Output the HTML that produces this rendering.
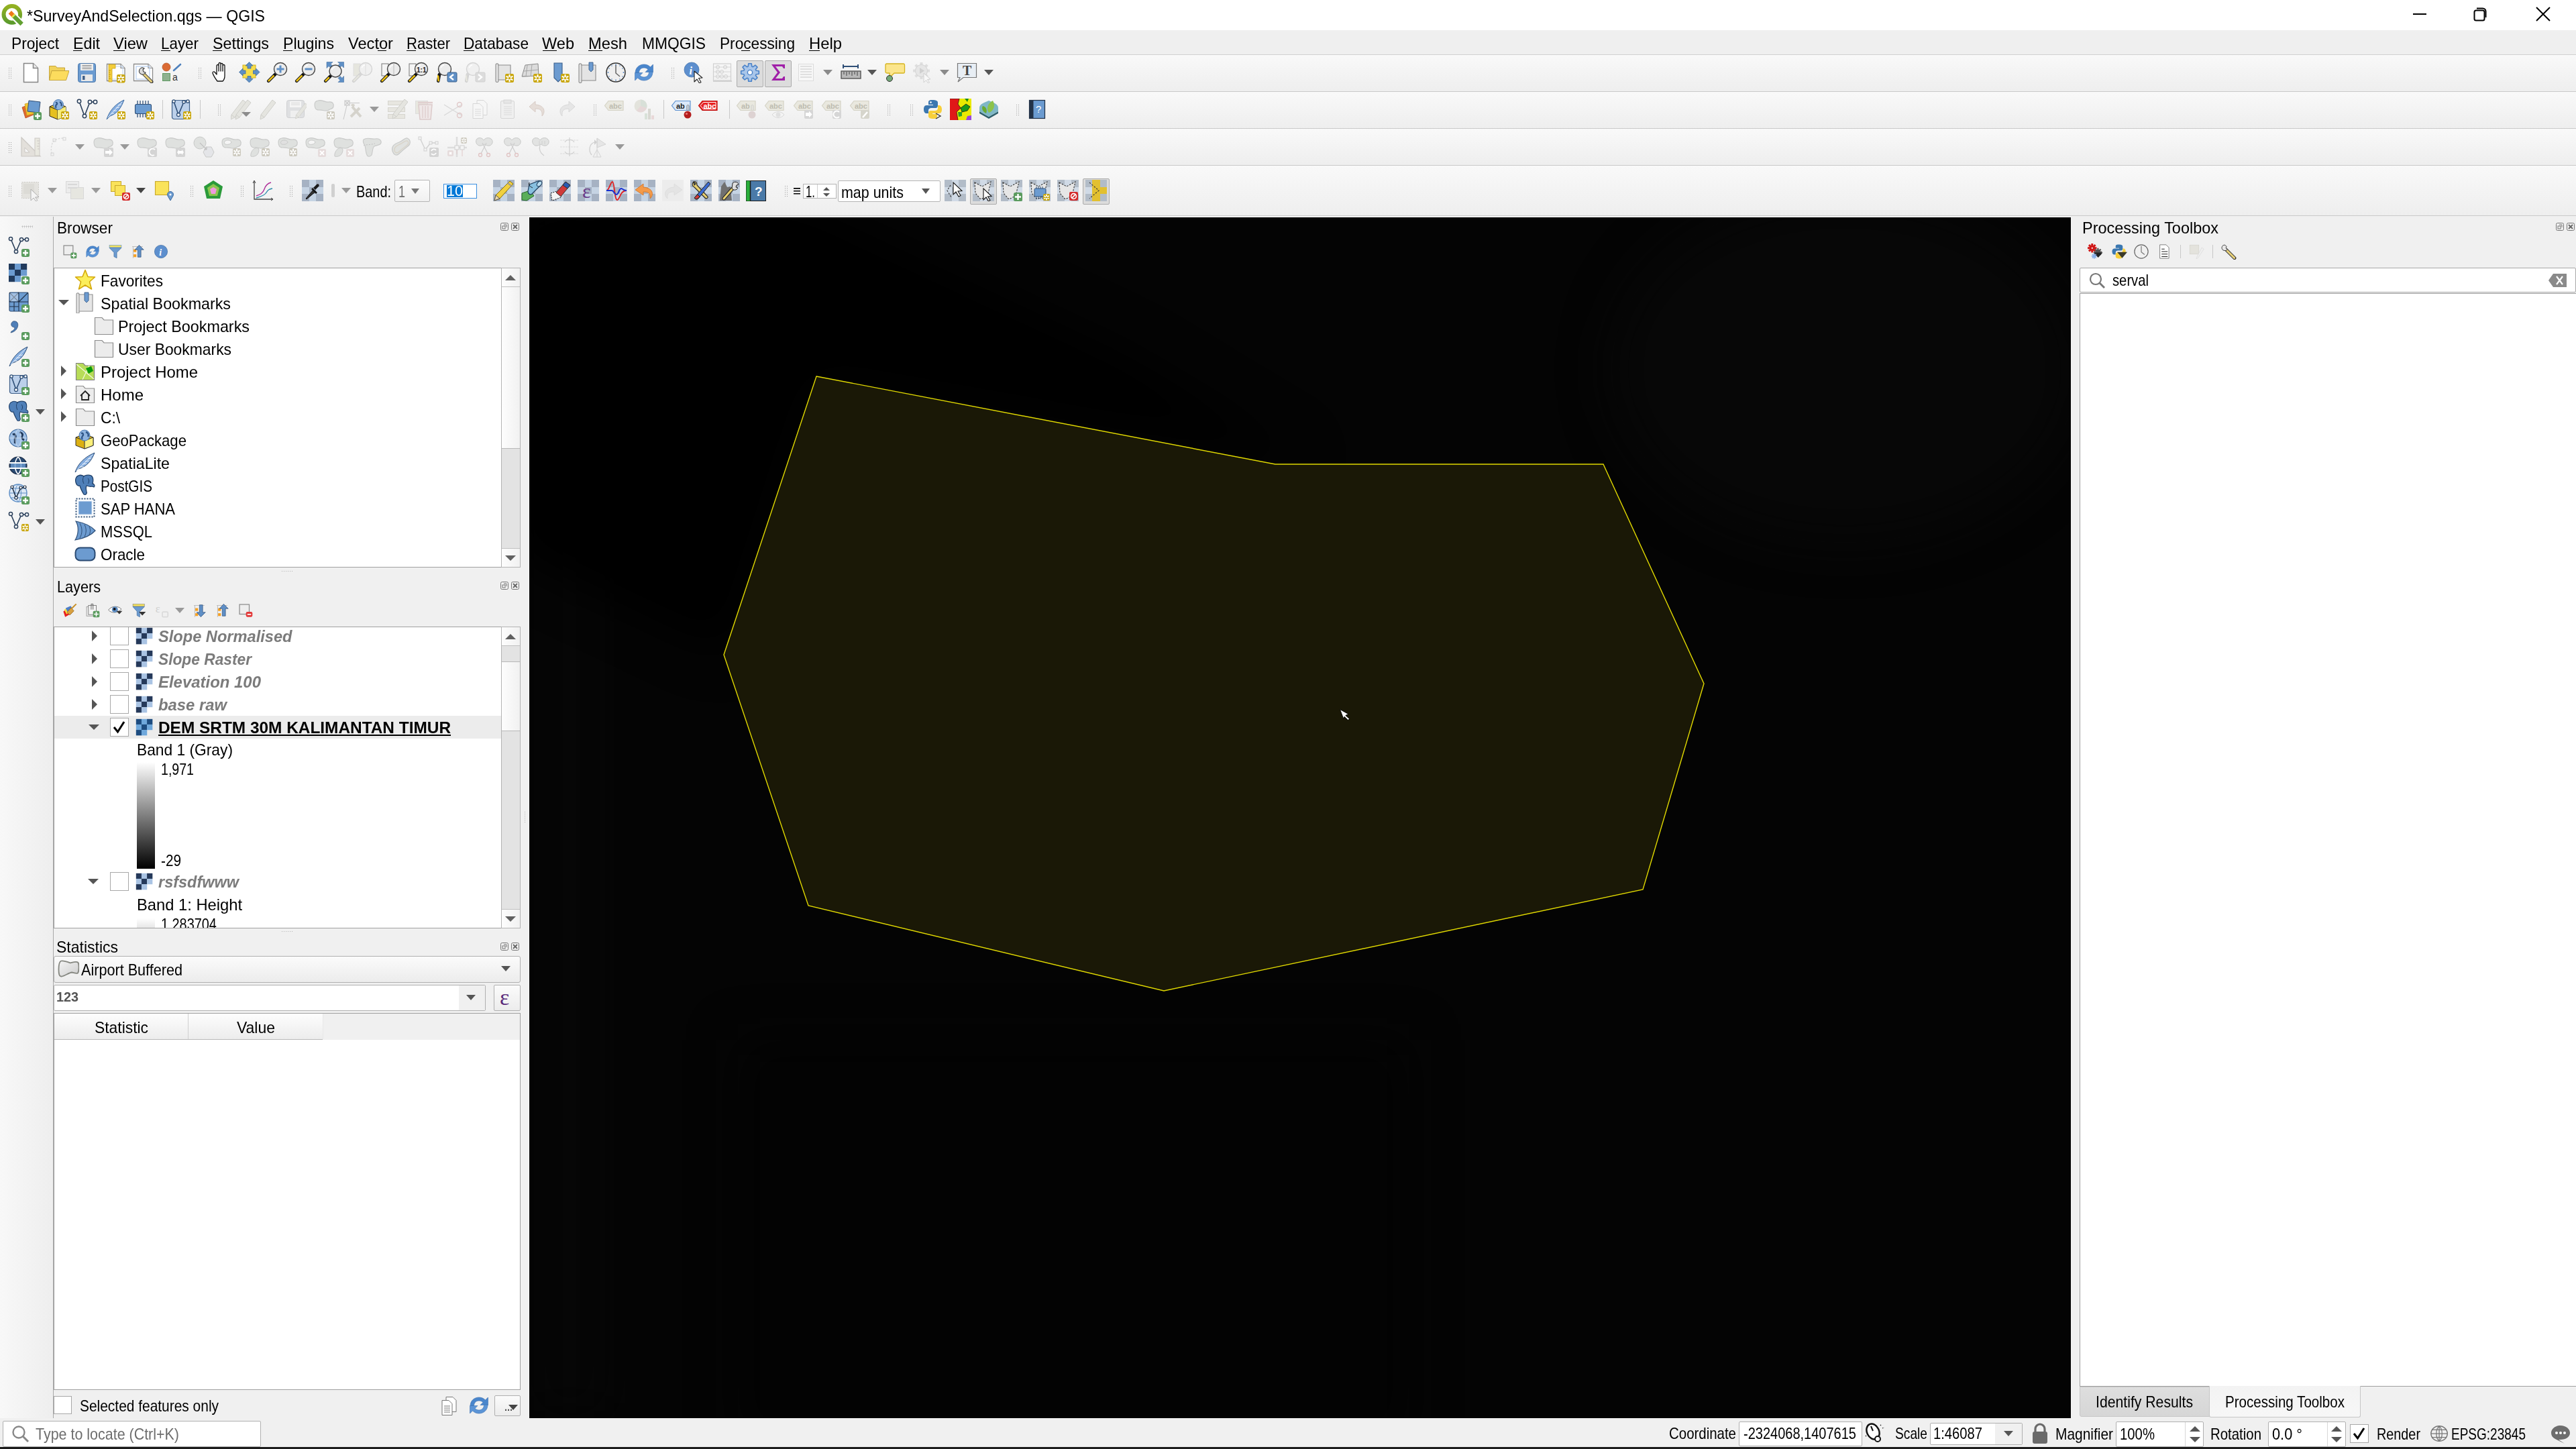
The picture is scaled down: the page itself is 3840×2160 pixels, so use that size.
<!DOCTYPE html>
<html><head><meta charset="utf-8"><style>
*{margin:0;padding:0;box-sizing:content-box}
html,body{width:3840px;height:2160px;overflow:hidden;background:#f0f0f0;position:relative}
.a{position:absolute}
.t{position:absolute;white-space:nowrap;font-family:"Liberation Sans",sans-serif;transform-origin:0 0}
</style></head><body>
<div class="a" style="left:0px;top:0px;width:3840px;height:45px;background:#ffffff;"></div>
<svg class="a" style="left:0;top:0" width="40" height="45"><defs><linearGradient id="qg" x1="0" y1="0" x2="0" y2="1"><stop offset="0" stop-color="#93b122"/><stop offset="1" stop-color="#5c9b2c"/></linearGradient></defs><circle cx="17.8" cy="21.4" r="12.3" fill="none" stroke="url(#qg)" stroke-width="6"/><path d="M20 23.6 L35 38.6" stroke="#fff" stroke-width="10.5"/><path d="M19.5 23 L32.6 36" stroke="#62a032" stroke-width="6.2"/><path d="M14.8 18.3 L19.6 23.1" stroke="#ee7a18" stroke-width="6.2"/><path d="M19.2 22.7 L21 24.5" stroke="#e6e448" stroke-width="6.2"/></svg>
<div class="t" style="left:40px;top:11.7px;font-size:24px;line-height:24px;color:#000;font-weight:400;font-style:normal;transform:scaleX(0.9642);">*SurveyAndSelection.qgs — QGIS</div>
<div class="a" style="left:3597px;top:20px;width:20px;height:2px;background:#000;"></div>
<svg class="a" style="left:3680px;top:5px" width="40" height="32"><rect x="8.5" y="10.5" width="15" height="15" rx="2.5" fill="none" stroke="#000" stroke-width="2"/><path d="M12 7.5 h9 a4.5 4.5 0 0 1 4.5 4.5 v9" fill="none" stroke="#000" stroke-width="2"/></svg>
<svg class="a" style="left:3775px;top:5px" width="32" height="32"><path d="M6 6 L26 26 M26 6 L6 26" stroke="#000" stroke-width="2"/></svg>
<div class="a" style="left:0px;top:45px;width:3840px;height:36px;background:#efefef;"></div>
<div class="a" style="left:0px;top:81px;width:3840px;height:1px;background:#d0d0d0;"></div>
<div class="t" style="left:17px;top:53.2px;font-size:24px;line-height:24px;color:#000;font-weight:400;font-style:normal;transform:scaleX(0.9504);">Project</div>
<div class="a" style="left:49px;top:74.5px;width:7px;height:1.5px;background:#000;"></div>
<div class="t" style="left:109px;top:53.2px;font-size:24px;line-height:24px;color:#000;font-weight:400;font-style:normal;transform:scaleX(0.9671);">Edit</div>
<div class="a" style="left:109px;top:74.5px;width:13px;height:1.5px;background:#000;"></div>
<div class="t" style="left:169px;top:53.2px;font-size:24px;line-height:24px;color:#000;font-weight:400;font-style:normal;transform:scaleX(0.9885);">View</div>
<div class="a" style="left:169px;top:74.5px;width:17px;height:1.5px;background:#000;"></div>
<div class="t" style="left:240px;top:53.2px;font-size:24px;line-height:24px;color:#000;font-weight:400;font-style:normal;transform:scaleX(0.9326);">Layer</div>
<div class="a" style="left:240px;top:74.5px;width:14px;height:1.5px;background:#000;"></div>
<div class="t" style="left:317px;top:53.2px;font-size:24px;line-height:24px;color:#000;font-weight:400;font-style:normal;transform:scaleX(0.9686);">Settings</div>
<div class="a" style="left:317px;top:74.5px;width:14px;height:1.5px;background:#000;"></div>
<div class="t" style="left:422px;top:53.2px;font-size:24px;line-height:24px;color:#000;font-weight:400;font-style:normal;transform:scaleX(0.9655);">Plugins</div>
<div class="a" style="left:422px;top:74.5px;width:14px;height:1.5px;background:#000;"></div>
<div class="t" style="left:519px;top:53.2px;font-size:24px;line-height:24px;color:#000;font-weight:400;font-style:normal;transform:scaleX(0.9846);">Vector</div>
<div class="a" style="left:563px;top:74.5px;width:13px;height:1.5px;background:#000;"></div>
<div class="t" style="left:606px;top:53.2px;font-size:24px;line-height:24px;color:#000;font-weight:400;font-style:normal;transform:scaleX(0.9195);">Raster</div>
<div class="a" style="left:606px;top:74.5px;width:14px;height:1.5px;background:#000;"></div>
<div class="t" style="left:691px;top:53.2px;font-size:24px;line-height:24px;color:#000;font-weight:400;font-style:normal;transform:scaleX(0.9440);">Database</div>
<div class="a" style="left:691px;top:74.5px;width:16px;height:1.5px;background:#000;"></div>
<div class="t" style="left:808px;top:53.2px;font-size:24px;line-height:24px;color:#000;font-weight:400;font-style:normal;transform:scaleX(0.9812);">Web</div>
<div class="a" style="left:809px;top:74.5px;width:21px;height:1.5px;background:#000;"></div>
<div class="t" style="left:877px;top:53.2px;font-size:24px;line-height:24px;color:#000;font-weight:400;font-style:normal;transform:scaleX(0.9883);">Mesh</div>
<div class="a" style="left:877px;top:74.5px;width:21px;height:1.5px;background:#000;"></div>
<div class="t" style="left:957px;top:53.2px;font-size:24px;line-height:24px;color:#000;font-weight:400;font-style:normal;transform:scaleX(0.9500);">MMQGIS</div>
<div class="t" style="left:1073px;top:53.2px;font-size:24px;line-height:24px;color:#000;font-weight:400;font-style:normal;transform:scaleX(0.9433);">Processing</div>
<div class="a" style="left:1105px;top:74.5px;width:13px;height:1.5px;background:#000;"></div>
<div class="t" style="left:1206px;top:53.2px;font-size:24px;line-height:24px;color:#000;font-weight:400;font-style:normal;transform:scaleX(0.9927);">Help</div>
<div class="a" style="left:1206px;top:74.5px;width:16px;height:1.5px;background:#000;"></div>
<div class="a" style="left:0px;top:82px;width:3840px;height:54px;background:linear-gradient(#f9f9f9,#eeeeee);"></div>
<div class="a" style="left:0px;top:137px;width:3840px;height:54px;background:linear-gradient(#f9f9f9,#eeeeee);"></div>
<div class="a" style="left:0px;top:192px;width:3840px;height:54px;background:linear-gradient(#f9f9f9,#eeeeee);"></div>
<div class="a" style="left:0px;top:247px;width:3840px;height:74px;background:linear-gradient(#f9f9f9,#eeeeee);"></div>
<div class="a" style="left:0px;top:136px;width:3840px;height:1px;background:#c9c9c9;"></div>
<div class="a" style="left:0px;top:191px;width:3840px;height:1px;background:#c9c9c9;"></div>
<div class="a" style="left:0px;top:246px;width:3840px;height:1px;background:#c9c9c9;"></div>
<div class="a" style="left:0px;top:321px;width:3840px;height:1px;background:#c9c9c9;"></div>
<div class="a" style="left:0px;top:322px;width:3840px;height:1px;background:#f0f0f0;"></div>
<svg class="a" style="left:13px;top:101px" width="5" height="17"><rect x="0" y="0" width="1" height="1" fill="#9a9a9a"/><rect x="3" y="0" width="1" height="1" fill="#9a9a9a"/><rect x="0" y="3" width="1" height="1" fill="#9a9a9a"/><rect x="3" y="3" width="1" height="1" fill="#9a9a9a"/><rect x="0" y="6" width="1" height="1" fill="#9a9a9a"/><rect x="3" y="6" width="1" height="1" fill="#9a9a9a"/><rect x="0" y="9" width="1" height="1" fill="#9a9a9a"/><rect x="3" y="9" width="1" height="1" fill="#9a9a9a"/><rect x="0" y="12" width="1" height="1" fill="#9a9a9a"/><rect x="3" y="12" width="1" height="1" fill="#9a9a9a"/><rect x="0" y="15" width="1" height="1" fill="#9a9a9a"/><rect x="3" y="15" width="1" height="1" fill="#9a9a9a"/></svg>
<svg class="a" style="left:30px;top:92px" width="32" height="32" viewBox="0 0 32 32"><path d="M5.5 2.5 H19.5 L26.5 9.5 V30.5 H5.5 Z" fill="#fff" stroke="#858585" stroke-width="1.5"/><path d="M19.5 2.5 V9.5 H26.5" fill="#ebebeb" stroke="#858585" stroke-width="1.5"/></svg>
<svg class="a" style="left:71px;top:92px" width="32" height="32" viewBox="0 0 32 32"><path d="M2.5 6.5 H12 L14 9 H25.5 V27.5 H2.5 Z" fill="#f1d25a" stroke="#c6a53b"/><path d="M6 13.5 H32 L27.5 27.5 H2.5 Z" fill="#fcdc5d" stroke="#c6a53b"/></svg>
<svg class="a" style="left:114px;top:92px" width="32" height="32" viewBox="0 0 32 32"><rect x="2.5" y="2.5" width="26" height="28" rx="3" fill="#6b9bd0" stroke="#4c78aa"/><rect x="6" y="3" width="19" height="10" fill="#eeeeee"/><path d="M8.5 5.5 H22.5 M8.5 8 H22.5 M8.5 10.5 H22.5" stroke="#7a7a7a" stroke-width="0.9"/><rect x="7" y="19" width="17" height="10" fill="#e8e8e8"/><rect x="9" y="21" width="3.5" height="6" fill="#3f5f88"/></svg>
<svg class="a" style="left:156px;top:92px" width="32" height="32" viewBox="0 0 32 32"><path d="M3.5 3.5 H24 L30 9.5 V28.5 H3.5 Z" fill="#fff" stroke="#8c8c8c" stroke-width="1.3"/><path d="M24 3.5 V9.5 H30" fill="#e8e8e8" stroke="#8c8c8c" stroke-width="1.2"/><rect x="8" y="7" width="19" height="19" fill="none" stroke="#bcd3f1" stroke-width="1"/><path d="M6 4 H16 V10 H11 V30 H6 Z" fill="#f4cd3a" stroke="#c9a520" stroke-width="0.8"/><path d="M6 13 H9 M6 16 H8 M6 19 H9 M6 22 H8 M6 25 H9" stroke="#b08a10" stroke-width="0.8"/><rect x="18" y="19" width="12.5" height="12.5" rx="2.2" fill="#c9a60a"/><g stroke="#fff" stroke-width="2.12" stroke-linecap="round"><path d="M24.25 20.75 V29.75 M20.335 23.0 L28.165 27.5 M20.335 27.5 L28.165 23.0"/></g><circle cx="24.25" cy="25.25" r="1.62" fill="#c9a60a"/></svg>
<svg class="a" style="left:198px;top:92px" width="32" height="32" viewBox="0 0 32 32"><path d="M1.5 3.5 H23 L29.5 9.5 V28.5 H1.5 Z" fill="#fff" stroke="#8c8c8c" stroke-width="1.3"/><path d="M23 3.5 V9.5 H29.5" fill="#e8e8e8" stroke="#8c8c8c" stroke-width="1.2"/><rect x="5" y="7" width="20" height="19" fill="none" stroke="#b7cff0" stroke-width="1.2"/><path d="M13 15 L28 30" stroke="#444" stroke-width="5" stroke-linecap="round"/><path d="M13.5 15.5 L27.5 29.5" stroke="#e6cf7a" stroke-width="3" stroke-linecap="round"/><path d="M15 9 a5 5 0 1 0 4 7 l-3-1 l-1-3 l2-2 Z" fill="#ddd" stroke="#444" stroke-width="1.2"/></svg>
<svg class="a" style="left:240px;top:92px" width="32" height="32" viewBox="0 0 32 32"><circle cx="8" cy="8" r="6" fill="#db6a33" stroke="#b5562a" stroke-width="0.8"/><path d="M19 13 L29 4" stroke="#4f81bd" stroke-width="2.6" stroke-linecap="round"/><rect x="2.5" y="17.5" width="11" height="11" fill="#8fb18f" stroke="#5f9a62" stroke-width="1"/><text x="17" y="28" font-family="Liberation Sans" font-size="14" fill="#333">a</text></svg>
<svg class="a" style="left:296px;top:101px" width="5" height="17"><rect x="0" y="0" width="1" height="1" fill="#9a9a9a"/><rect x="3" y="0" width="1" height="1" fill="#9a9a9a"/><rect x="0" y="3" width="1" height="1" fill="#9a9a9a"/><rect x="3" y="3" width="1" height="1" fill="#9a9a9a"/><rect x="0" y="6" width="1" height="1" fill="#9a9a9a"/><rect x="3" y="6" width="1" height="1" fill="#9a9a9a"/><rect x="0" y="9" width="1" height="1" fill="#9a9a9a"/><rect x="3" y="9" width="1" height="1" fill="#9a9a9a"/><rect x="0" y="12" width="1" height="1" fill="#9a9a9a"/><rect x="3" y="12" width="1" height="1" fill="#9a9a9a"/><rect x="0" y="15" width="1" height="1" fill="#9a9a9a"/><rect x="3" y="15" width="1" height="1" fill="#9a9a9a"/></svg>
<svg class="a" style="left:315px;top:92px" width="32" height="32" viewBox="0 0 32 32"><path d="M9 29 C6 25 3 20 2 17 C1.5 15 4 14 5.5 16 L8 19 V6 C8 4 11 4 11 6 V14 V3 C11 1 14 1 14 3 V14 V4 C14 2 17 2 17 4 V14 V6 C17 4 20 4 20 6 V21 C20 25 19 27 17 29 Z" fill="#fff" stroke="#111" stroke-width="1.3" stroke-linejoin="round"/></svg>
<svg class="a" style="left:356px;top:92px" width="32" height="32" viewBox="0 0 32 32"><rect x="6" y="5" width="19" height="19" fill="#f7dd4a" stroke="#d2b21f" stroke-width="1"/><g fill="#5f90c6" stroke="#3f6ca0" stroke-width="0.8"><path d="M15.5 0.5 L21 6 H18 V10 H13 V6 H10 Z"/><path d="M15.5 31 L21 25.5 H18 V21.5 H13 V25.5 H10 Z"/><path d="M0.5 15.5 L6 10 V13 H10 V18 H6 V21 Z"/><path d="M31 15.5 L25.5 10 V13 H21.5 V18 H25.5 V21 Z"/></g></svg>
<svg class="a" style="left:397px;top:92px" width="32" height="32" viewBox="0 0 32 32"><path d="M3.2 28.8 L13.1 18.9" stroke="#222" stroke-width="4.6" stroke-linecap="round"/><path d="M3.6 28.4 L11.1 20.9" stroke="#f2c40f" stroke-width="2.4" stroke-linecap="round"/><path d="M11.5 20.5 L14.6 17.4" stroke="#111" stroke-width="3.5"/><circle cx="21" cy="11" r="9.5" fill="#ececec" stroke="#454545" stroke-width="1.4"/><path d="M15.3 9.1 A6.6 6.6 0 0 1 20.1 4.8" fill="none" stroke="#fff" stroke-width="1.2"/><path d="M21 5.5 V16.5 M15.5 11 H26.5" stroke="#5f90c6" stroke-width="3"/></svg>
<svg class="a" style="left:439px;top:92px" width="32" height="32" viewBox="0 0 32 32"><path d="M3.2 28.8 L13.1 18.9" stroke="#222" stroke-width="4.6" stroke-linecap="round"/><path d="M3.6 28.4 L11.1 20.9" stroke="#f2c40f" stroke-width="2.4" stroke-linecap="round"/><path d="M11.5 20.5 L14.6 17.4" stroke="#111" stroke-width="3.5"/><circle cx="21" cy="11" r="9.5" fill="#ececec" stroke="#454545" stroke-width="1.4"/><path d="M15.3 9.1 A6.6 6.6 0 0 1 20.1 4.8" fill="none" stroke="#fff" stroke-width="1.2"/><path d="M15.5 11 H26.5" stroke="#5f90c6" stroke-width="3"/></svg>
<svg class="a" style="left:482px;top:92px" width="32" height="32" viewBox="0 0 32 32"><g fill="#5f90c6" stroke="#3f6ca0" stroke-width="0.6"><path d="M6 0.5 H14 L11 3.5 L14 6.5 L11 9.5 L8 6.5 L5 9.5 V0.5 Z"/><path d="M30.5 0.5 V9 L27.5 6 L24.5 9 L21.5 6 L24.5 3 L21.5 0.5 Z"/><path d="M30.5 30.5 H22 L25 27.5 L22 24.5 L25 21.5 L28 24.5 L30.5 21.5 Z"/></g><path d="M3.2 28.8 L10.4 21.6" stroke="#222" stroke-width="4.6" stroke-linecap="round"/><path d="M3.6 28.4 L8.4 23.6" stroke="#f2c40f" stroke-width="2.4" stroke-linecap="round"/><path d="M8.8 23.2 L11.9 20.1" stroke="#111" stroke-width="3.5"/><circle cx="18" cy="14" r="9" fill="#ececec" stroke="#454545" stroke-width="1.4"/><path d="M12.6 12.2 A6.3 6.3 0 0 1 17.1 8.1" fill="none" stroke="#fff" stroke-width="1.2"/></svg>
<svg class="a" style="left:524px;top:92px" width="32" height="32" viewBox="0 0 32 32"><rect x="3" y="3" width="10" height="18" fill="#e6e6de" stroke="#ddd"/><path d="M3.2 28.8 L13.1 18.9" stroke="#d0d0d0" stroke-width="4.6" stroke-linecap="round"/><path d="M3.6 28.4 L11.1 20.9" stroke="#e6e6de" stroke-width="2.4" stroke-linecap="round"/><path d="M11.5 20.5 L14.6 17.4" stroke="#d6d6d6" stroke-width="3.5"/><circle cx="21" cy="11" r="9.5" fill="#f0f0f0" stroke="#d4d4d4" stroke-width="1.4"/><path d="M15.3 9.1 A6.6 6.6 0 0 1 20.1 4.8" fill="none" stroke="#fff" stroke-width="1.2"/><path d="M21 3 V19" stroke="#ddd"/></svg>
<svg class="a" style="left:566px;top:92px" width="32" height="32" viewBox="0 0 32 32"><rect x="3" y="3" width="10" height="18" fill="#f4f4f4" stroke="#777"/><path d="M3.2 28.8 L13.1 18.9" stroke="#222" stroke-width="4.6" stroke-linecap="round"/><path d="M3.6 28.4 L11.1 20.9" stroke="#f2c40f" stroke-width="2.4" stroke-linecap="round"/><path d="M11.5 20.5 L14.6 17.4" stroke="#111" stroke-width="3.5"/><circle cx="21" cy="11" r="9.5" fill="#ececec" stroke="#454545" stroke-width="1.4"/><path d="M15.3 9.1 A6.6 6.6 0 0 1 20.1 4.8" fill="none" stroke="#fff" stroke-width="1.2"/><path d="M21 3 V19" stroke="#bbb"/></svg>
<svg class="a" style="left:607px;top:92px" width="32" height="32" viewBox="0 0 32 32"><rect x="3" y="3" width="10" height="18" fill="#f4f4f4" stroke="#777"/><path d="M3.2 28.8 L13.1 18.9" stroke="#222" stroke-width="4.6" stroke-linecap="round"/><path d="M3.6 28.4 L11.1 20.9" stroke="#f2c40f" stroke-width="2.4" stroke-linecap="round"/><path d="M11.5 20.5 L14.6 17.4" stroke="#111" stroke-width="3.5"/><circle cx="21" cy="11" r="9.5" fill="#ececec" stroke="#454545" stroke-width="1.4"/><path d="M15.3 9.1 A6.6 6.6 0 0 1 20.1 4.8" fill="none" stroke="#fff" stroke-width="1.2"/><text x="14" y="15.5" font-family="Liberation Sans" font-weight="bold" font-size="10" fill="#222">1:1</text></svg>
<svg class="a" style="left:650px;top:92px" width="32" height="32" viewBox="0 0 32 32"><path d="M3.2 28.8 L5.1 18.9" stroke="#222" stroke-width="4.6" stroke-linecap="round"/><path d="M3.6 28.4 L3.1 20.9" stroke="#f2c40f" stroke-width="2.4" stroke-linecap="round"/><path d="M3.5 20.5 L6.6 17.4" stroke="#111" stroke-width="3.5"/><circle cx="13" cy="11" r="9.5" fill="#ececec" stroke="#454545" stroke-width="1.4"/><path d="M7.3 9.1 A6.6 6.6 0 0 1 12.1 4.8" fill="none" stroke="#fff" stroke-width="1.2"/><rect x="17" y="16" width="14" height="14" rx="1.5" fill="#5f90c6" stroke="#3a5f8a"/><path d="M26 19 L21 23 L26 27" fill="none" stroke="#fff" stroke-width="2.4"/></svg>
<svg class="a" style="left:692px;top:92px" width="32" height="32" viewBox="0 0 32 32"><path d="M3.2 28.8 L5.1 18.9" stroke="#d0d0d0" stroke-width="4.6" stroke-linecap="round"/><path d="M3.6 28.4 L3.1 20.9" stroke="#e6e6de" stroke-width="2.4" stroke-linecap="round"/><path d="M3.5 20.5 L6.6 17.4" stroke="#d6d6d6" stroke-width="3.5"/><circle cx="13" cy="11" r="9.5" fill="#f0f0f0" stroke="#d4d4d4" stroke-width="1.4"/><path d="M7.3 9.1 A6.6 6.6 0 0 1 12.1 4.8" fill="none" stroke="#fff" stroke-width="1.2"/><rect x="17" y="16" width="14" height="14" rx="1.5" fill="#dcdcdc" stroke="#d0d0d0"/><path d="M21 19 L26 23 L21 27" fill="none" stroke="#fff" stroke-width="2.4"/></svg>
<svg class="a" style="left:735px;top:92px" width="32" height="32" viewBox="0 0 32 32"><path d="M4 5 C4 2 8 2 8 5 H26 V27 H8 V29 C8 31 4 31 4 29 Z" fill="#e4e4e4" stroke="#8a8a8a" stroke-width="1.1"/><path d="M8 5 V27" stroke="#8a8a8a"/><rect x="18" y="18" width="13" height="13" rx="2.2" fill="#c9a60a"/><g stroke="#fff" stroke-width="2.21" stroke-linecap="round"><path d="M24.5 19.82 V29.18 M20.4284 22.16 L28.5716 26.84 M20.4284 26.84 L28.5716 22.16"/></g><circle cx="24.5" cy="24.5" r="1.69" fill="#c9a60a"/></svg>
<svg class="a" style="left:777px;top:92px" width="32" height="32" viewBox="0 0 32 32"><path d="M1 22 L6 5 L25 3 L26 21 Z" fill="#dcdcdc" stroke="#8a8a8a" stroke-width="1"/><path d="M4 14 L25 12 M9 5 L7 22 M16 4 L14 22 M1 22 L26 21" stroke="#999" stroke-width="0.8" fill="none"/><rect x="18" y="18" width="13" height="13" rx="2.2" fill="#c9a60a"/><g stroke="#fff" stroke-width="2.21" stroke-linecap="round"><path d="M24.5 19.82 V29.18 M20.4284 22.16 L28.5716 26.84 M20.4284 26.84 L28.5716 22.16"/></g><circle cx="24.5" cy="24.5" r="1.69" fill="#c9a60a"/></svg>
<svg class="a" style="left:818px;top:92px" width="32" height="32" viewBox="0 0 32 32"><path d="M8 2 H20 V24 L14 30 L8 24 Z" fill="#6c9bd0" stroke="#3b5f8a" stroke-width="1.1"/><rect x="18" y="18" width="13" height="13" rx="2.2" fill="#c9a60a"/><g stroke="#fff" stroke-width="2.21" stroke-linecap="round"><path d="M24.5 19.82 V29.18 M20.4284 22.16 L28.5716 26.84 M20.4284 26.84 L28.5716 22.16"/></g><circle cx="24.5" cy="24.5" r="1.69" fill="#c9a60a"/></svg>
<svg class="a" style="left:860px;top:92px" width="32" height="32" viewBox="0 0 32 32"><path d="M3 5 C3 2 7 2 7 5 H28 V28 H7 V30 C7 32 3 32 3 30 Z" fill="#e4e4e4" stroke="#8a8a8a" stroke-width="1.1"/><path d="M7 5 V28" stroke="#8a8a8a"/><path d="M18 1 H24 V12 L21 15 L18 12 Z" fill="#6c9bd0" stroke="#3b5f8a" stroke-width="0.9"/></svg>
<svg class="a" style="left:902px;top:92px" width="32" height="32" viewBox="0 0 32 32"><circle cx="16" cy="16" r="14" fill="#efefef" stroke="#333" stroke-width="1.5"/><path d="M16 5 V17 L22 22" fill="none" stroke="#666" stroke-width="1.5"/><g fill="#4f81bd"><circle cx="16" cy="4.5" r="0.9"/><circle cx="27.5" cy="16" r="0.9"/><circle cx="16" cy="27.5" r="0.9"/><circle cx="4.5" cy="16" r="0.9"/><circle cx="22" cy="6" r="0.8"/><circle cx="26" cy="10" r="0.8"/><circle cx="26" cy="22" r="0.8"/><circle cx="22" cy="26" r="0.8"/><circle cx="10" cy="26" r="0.8"/><circle cx="6" cy="22" r="0.8"/><circle cx="6" cy="10" r="0.8"/><circle cx="10" cy="6" r="0.8"/></g></svg>
<svg class="a" style="left:944px;top:92px" width="32" height="32" viewBox="0 0 32 32"><path d="M3 17 C3 9 9 4 16 4 C20 4 23 5.5 25.5 8 L29.5 4 V15.5 H18 L22 11.5 C20.5 10 18.5 9 16 9 C11.5 9 8.5 12.5 8.5 17 Z" fill="#4a86cc" stroke="#3a6eb0" stroke-width="0.6"/><path d="M29 15 C29 23 23 28 16 28 C12 28 9 26.5 6.5 24 L2.5 28 V16.5 H14 L10 20.5 C11.5 22 13.5 23 16 23 C20.5 23 23.5 19.5 23.5 15 Z" fill="#5b94d6" stroke="#3a6eb0" stroke-width="0.6"/></svg>
<svg class="a" style="left:1001px;top:101px" width="5" height="17"><rect x="0" y="0" width="1" height="1" fill="#9a9a9a"/><rect x="3" y="0" width="1" height="1" fill="#9a9a9a"/><rect x="0" y="3" width="1" height="1" fill="#9a9a9a"/><rect x="3" y="3" width="1" height="1" fill="#9a9a9a"/><rect x="0" y="6" width="1" height="1" fill="#9a9a9a"/><rect x="3" y="6" width="1" height="1" fill="#9a9a9a"/><rect x="0" y="9" width="1" height="1" fill="#9a9a9a"/><rect x="3" y="9" width="1" height="1" fill="#9a9a9a"/><rect x="0" y="12" width="1" height="1" fill="#9a9a9a"/><rect x="3" y="12" width="1" height="1" fill="#9a9a9a"/><rect x="0" y="15" width="1" height="1" fill="#9a9a9a"/><rect x="3" y="15" width="1" height="1" fill="#9a9a9a"/></svg>
<svg class="a" style="left:1018px;top:92px" width="32" height="32" viewBox="0 0 32 32"><circle cx="13" cy="12" r="11" fill="#5d8fce" stroke="#4a78b0" stroke-width="0.8"/><text x="9.5" y="19" font-family="Liberation Serif" font-style="italic" font-weight="bold" font-size="16" fill="#fff">i</text><path d="M17 14 L17 30 L21 26 L24.5 32 L27 30.5 L23.5 24.5 L29 24 Z" fill="#fff" stroke="#222" stroke-width="1.1" stroke-linejoin="round"/></svg>
<svg class="a" style="left:1061px;top:92px" width="32" height="32" viewBox="0 0 32 32"><rect x="2.5" y="3" width="26" height="25" fill="none" stroke="#d0d0d0" stroke-width="1.2"/><path d="M2 29 H30" stroke="#d0d0d0" stroke-width="2"/><g fill="#f5f5f5" stroke="#cfcfcf" stroke-width="1"><circle cx="9" cy="8" r="2.5"/><circle cx="20" cy="8" r="2.5"/><circle cx="9" cy="15" r="2.5"/><circle cx="15" cy="15" r="2.5"/><circle cx="9" cy="22" r="2.5"/><circle cx="15" cy="22" r="2.5"/><circle cx="21" cy="22" r="2.5"/></g><path d="M3 8 H28 M3 15 H28 M3 22 H28" stroke="#d0d0d0" stroke-width="0.8"/></svg>
<div class="a" style="left:1098px;top:90px;width:38px;height:38px;background:#dcdcdc;border:1px solid #ababab;border-radius:2px"></div>
<svg class="a" style="left:1102px;top:92px" width="32" height="32" viewBox="0 0 32 32"><polygon points="29.32,13.78 29.32,18.22 25.10,18.72 24.36,20.51 26.98,23.85 23.85,26.98 20.51,24.36 18.72,25.10 18.22,29.32 13.78,29.32 13.28,25.10 11.49,24.36 8.15,26.98 5.02,23.85 7.64,20.51 6.90,18.72 2.68,18.22 2.68,13.78 6.90,13.28 7.64,11.49 5.02,8.15 8.15,5.02 11.49,7.64 13.28,6.90 13.78,2.68 18.22,2.68 18.72,6.90 20.51,7.64 23.85,5.02 26.98,8.15 24.36,11.49 25.10,13.28" fill="#a9c6ea" stroke="#4a82c8" stroke-width="1.6" stroke-linejoin="round"/><circle cx="16" cy="16" r="3.6" fill="#fff" stroke="#4a82c8" stroke-width="1.4"/></svg>
<div class="a" style="left:1140px;top:90px;width:38px;height:38px;background:#dcdcdc;border:1px solid #ababab;border-radius:2px"></div>
<svg class="a" style="left:1144px;top:92px" width="32" height="32" viewBox="0 0 32 32"><path d="M6 4 H26 V10 H24 L22 7 H12 L19 16 L12 25 H22 L24 22 H26 V28 H6 L15 16 Z" fill="#a020a8"/></svg>
<svg class="a" style="left:1186px;top:92px" width="32" height="32" viewBox="0 0 32 32"><rect x="4.5" y="3.5" width="22" height="25" fill="#f7f7f7" stroke="#dcdcdc"/><path d="M7 7 H24 M7 11 H24 M7 15 H24 M7 19 H24 M7 23 H24" stroke="#d8d8d8" stroke-width="1.5"/></svg>
<svg class="a" style="left:1227.0px;top:104px" width="14" height="8"><path d="M0 0 H14 L7.0 8 Z" fill="#8a8a8a"/></svg>
<svg class="a" style="left:1252px;top:92px" width="32" height="32" viewBox="0 0 32 32"><path d="M5 4 V10 M27 4 V10 M5 7 H27" stroke="#2f4f77" stroke-width="2"/><rect x="2" y="14" width="29" height="11" fill="#b8b8b8" stroke="#555" stroke-width="1.4"/><path d="M6 15 V19 M10 15 V21 M14 15 V19 M18 15 V21 M22 15 V19 M26 15 V21" stroke="#444" stroke-width="1"/></svg>
<svg class="a" style="left:1293.0px;top:104px" width="14" height="8"><path d="M0 0 H14 L7.0 8 Z" fill="#555"/></svg>
<svg class="a" style="left:1318px;top:92px" width="32" height="32" viewBox="0 0 32 32"><path d="M3 3 H29 C30 3 30.5 4 30.5 5 V15 C30.5 16 30 17 29 17 H15 L8 24 V17 H4 C3 17 2 16 2 15 V5 C2 4 3 3 4 3 Z" fill="#fbe58c" stroke="#d5b41f" stroke-width="1.3"/><circle cx="8" cy="25" r="4.5" fill="#74a878" stroke="#333" stroke-width="1"/></svg>
<svg class="a" style="left:1360px;top:92px" width="32" height="32" viewBox="0 0 32 32"><rect x="11.5" y="1" width="4" height="5" fill="#dedede" transform="rotate(0 13.5 13.5)"/><rect x="11.5" y="1" width="4" height="5" fill="#dedede" transform="rotate(45 13.5 13.5)"/><rect x="11.5" y="1" width="4" height="5" fill="#dedede" transform="rotate(90 13.5 13.5)"/><rect x="11.5" y="1" width="4" height="5" fill="#dedede" transform="rotate(135 13.5 13.5)"/><rect x="11.5" y="1" width="4" height="5" fill="#dedede" transform="rotate(180 13.5 13.5)"/><rect x="11.5" y="1" width="4" height="5" fill="#dedede" transform="rotate(225 13.5 13.5)"/><rect x="11.5" y="1" width="4" height="5" fill="#dedede" transform="rotate(270 13.5 13.5)"/><rect x="11.5" y="1" width="4" height="5" fill="#dedede" transform="rotate(315 13.5 13.5)"/><circle cx="13.5" cy="13.5" r="9" fill="#e6e6e6" stroke="#d4d4d4"/><path d="M11 9 L18 13.5 L11 18 Z" fill="#d0d0d0"/><path d="M17 17 V31 L20.5 27.5 L23.5 32 L25.5 31 L22.5 26.5 L27 26 Z" fill="#f8f8f8" stroke="#d0d0d0"/></svg>
<svg class="a" style="left:1401.0px;top:104px" width="14" height="8"><path d="M0 0 H14 L7.0 8 Z" fill="#8a8a8a"/></svg>
<svg class="a" style="left:1426px;top:92px" width="32" height="32" viewBox="0 0 32 32"><path d="M1.5 2.5 H29.5 V23.5 H10 L2 30 L5 23.5 H1.5 Z" fill="#e8eef4" stroke="#777" stroke-width="1.2"/><text x="9" y="20" font-family="Liberation Serif" font-weight="bold" font-size="20" fill="#444">T</text></svg>
<svg class="a" style="left:1467.0px;top:104px" width="14" height="8"><path d="M0 0 H14 L7.0 8 Z" fill="#555"/></svg>
<svg class="a" style="left:13px;top:156px" width="5" height="17"><rect x="0" y="0" width="1" height="1" fill="#9a9a9a"/><rect x="3" y="0" width="1" height="1" fill="#9a9a9a"/><rect x="0" y="3" width="1" height="1" fill="#9a9a9a"/><rect x="3" y="3" width="1" height="1" fill="#9a9a9a"/><rect x="0" y="6" width="1" height="1" fill="#9a9a9a"/><rect x="3" y="6" width="1" height="1" fill="#9a9a9a"/><rect x="0" y="9" width="1" height="1" fill="#9a9a9a"/><rect x="3" y="9" width="1" height="1" fill="#9a9a9a"/><rect x="0" y="12" width="1" height="1" fill="#9a9a9a"/><rect x="3" y="12" width="1" height="1" fill="#9a9a9a"/><rect x="0" y="15" width="1" height="1" fill="#9a9a9a"/><rect x="3" y="15" width="1" height="1" fill="#9a9a9a"/></svg>
<svg class="a" style="left:30px;top:147px" width="32" height="32" viewBox="0 0 32 32"><path d="M3 13 L15 8 L20 24 L8 29 Z" fill="#e0682f" stroke="#b35020" stroke-width="0.8"/><path d="M7 8 L19 5 L22 22 L10 25 Z" fill="#f2c62f" stroke="#c9a020" stroke-width="0.8"/><path d="M13 3 L30 5 L28 21 L11 19 Z" fill="#6b9bd0" stroke="#2f4f77" stroke-width="1"/><rect x="20" y="20" width="12" height="12" rx="2.5" fill="#5a9b5e"/><path d="M26.0 22 V30 M22 26.0 H30" stroke="#fff" stroke-width="2.4"/></svg>
<svg class="a" style="left:72px;top:147px" width="32" height="32" viewBox="0 0 32 32"><path d="M2 12 L14 7 L26 12 V26 L14 31 L2 26 Z" fill="#e6c020" stroke="#222" stroke-width="1"/><path d="M2 12 L14 17 L26 12 M14 17 V31" fill="none" stroke="#222" stroke-width="1"/><path d="M14 17 L26 12 V26 L14 31 Z" fill="#f6ec78"/><circle cx="15" cy="9" r="7.5" fill="#8fb4df" stroke="#4f7fb8"/><path d="M11 6 C13 5 14 8 12 9 C10 11 12 13 11 14 M17 5 C19 6 21 9 19 11" stroke="#2f5688" stroke-width="2.2" fill="none"/><rect x="19" y="19" width="12" height="12" rx="2.2" fill="#c9a60a"/><g stroke="#fff" stroke-width="2.04" stroke-linecap="round"><path d="M25.0 20.68 V29.32 M21.2416 22.84 L28.7584 27.16 M21.2416 27.16 L28.7584 22.84"/></g><circle cx="25.0" cy="25.0" r="1.56" fill="#c9a60a"/></svg>
<svg class="a" style="left:114px;top:147px" width="32" height="32" viewBox="0 0 32 32"><path d="M4 4 L12 26 L20 5 L28 5" fill="none" stroke="#2a3f5a" stroke-width="1.6"/><g fill="#fff" stroke="#2a3f5a" stroke-width="1.5"><circle cx="4" cy="4" r="2.7"/><circle cx="12" cy="26" r="2.7"/><circle cx="20" cy="5" r="2.7"/><circle cx="28" cy="5" r="2.7"/></g><rect x="19" y="19" width="12" height="12" rx="2.2" fill="#c9a60a"/><g stroke="#fff" stroke-width="2.04" stroke-linecap="round"><path d="M25.0 20.68 V29.32 M21.2416 22.84 L28.7584 27.16 M21.2416 27.16 L28.7584 22.84"/></g><circle cx="25.0" cy="25.0" r="1.56" fill="#c9a60a"/></svg>
<svg class="a" style="left:156px;top:147px" width="32" height="32" viewBox="0 0 32 32"><path d="M3 31 C6 22 12 10 29 2 C25 12 20 22 8 26 Z" fill="#86aee0" stroke="#3f6ca0" stroke-width="1"/><path d="M5 28 L26 5 M10 22 L14 22 M13 18 L18 18 M17 14 L22 13 M20 10 L25 9" stroke="#fff" stroke-width="0.8"/><rect x="19" y="19" width="12" height="12" rx="2.2" fill="#c9a60a"/><g stroke="#fff" stroke-width="2.04" stroke-linecap="round"><path d="M25.0 20.68 V29.32 M21.2416 22.84 L28.7584 27.16 M21.2416 27.16 L28.7584 22.84"/></g><circle cx="25.0" cy="25.0" r="1.56" fill="#c9a60a"/></svg>
<svg class="a" style="left:199px;top:147px" width="32" height="32" viewBox="0 0 32 32"><rect x="2.5" y="8.5" width="24" height="14" rx="2" fill="#6b9bd0" stroke="#2f4f77" stroke-width="1.1"/><path d="M6 3 V8 M10 3 V8 M14 3 V8 M18 3 V8 M22 3 V8 M6 23 V28 M10 23 V28 M14 23 V28 M18 23 V28 M22 23 V28" stroke="#2f4f77" stroke-width="1.3"/><rect x="19" y="19" width="12" height="12" rx="2.2" fill="#c9a60a"/><g stroke="#fff" stroke-width="2.04" stroke-linecap="round"><path d="M25.0 20.68 V29.32 M21.2416 22.84 L28.7584 27.16 M21.2416 27.16 L28.7584 22.84"/></g><circle cx="25.0" cy="25.0" r="1.56" fill="#c9a60a"/></svg>
<div class="a" style="left:242px;top:149.0px;width:1px;height:28px;background:#c8c8c8;"></div>
<svg class="a" style="left:254px;top:147px" width="32" height="32" viewBox="0 0 32 32"><rect x="2.5" y="2.5" width="26" height="28" rx="3" fill="#bcd0ea" stroke="#3f5f88" stroke-width="1.2"/><path d="M5 4 L12 24 L20 5 L26 4" fill="none" stroke="#2f4f77" stroke-width="1.6"/><g fill="#fff" stroke="#2f4f77" stroke-width="1.3"><circle cx="5" cy="4" r="2.2"/><circle cx="12" cy="24" r="2.5"/><circle cx="20" cy="5" r="2.2"/><circle cx="26" cy="4" r="2.2"/></g><rect x="19" y="19" width="12" height="12" rx="2.2" fill="#c9a60a"/><g stroke="#fff" stroke-width="2.04" stroke-linecap="round"><path d="M25.0 20.68 V29.32 M21.2416 22.84 L28.7584 27.16 M21.2416 27.16 L28.7584 22.84"/></g><circle cx="25.0" cy="25.0" r="1.56" fill="#c9a60a"/></svg>
<div class="a" style="left:298px;top:149.0px;width:1px;height:28px;background:#c8c8c8;"></div>
<svg class="a" style="left:325px;top:156px" width="5" height="17"><rect x="0" y="0" width="1" height="1" fill="#9a9a9a"/><rect x="3" y="0" width="1" height="1" fill="#9a9a9a"/><rect x="0" y="3" width="1" height="1" fill="#9a9a9a"/><rect x="3" y="3" width="1" height="1" fill="#9a9a9a"/><rect x="0" y="6" width="1" height="1" fill="#9a9a9a"/><rect x="3" y="6" width="1" height="1" fill="#9a9a9a"/><rect x="0" y="9" width="1" height="1" fill="#9a9a9a"/><rect x="3" y="9" width="1" height="1" fill="#9a9a9a"/><rect x="0" y="12" width="1" height="1" fill="#9a9a9a"/><rect x="3" y="12" width="1" height="1" fill="#9a9a9a"/><rect x="0" y="15" width="1" height="1" fill="#9a9a9a"/><rect x="3" y="15" width="1" height="1" fill="#9a9a9a"/></svg>
<svg class="a" style="left:344px;top:147px" width="32" height="32" viewBox="0 0 32 32"><g transform="translate(-2 1) scale(1)"><path d="M20 1 L25 5 L8 27 L2 30 L3 23 Z" fill="#e5e5e0" stroke="#cfcfca" stroke-width="1"/><path d="M3 23 L8 27" stroke="#cfcfca"/></g><g transform="translate(5 1) scale(1)"><path d="M20 1 L25 5 L8 27 L2 30 L3 23 Z" fill="#e5e5e0" stroke="#cfcfca" stroke-width="1"/><path d="M3 23 L8 27" stroke="#cfcfca"/></g><path d="M16 20 H30 L23 27 Z" fill="#8c8c8c"/></svg>
<svg class="a" style="left:383px;top:147px" width="32" height="32" viewBox="0 0 32 32"><g transform="translate(3 1) scale(1)"><path d="M20 1 L25 5 L8 27 L2 30 L3 23 Z" fill="#e5e5e0" stroke="#cfcfca" stroke-width="1"/><path d="M3 23 L8 27" stroke="#cfcfca"/></g></svg>
<svg class="a" style="left:425px;top:147px" width="32" height="32" viewBox="0 0 32 32"><rect x="2.5" y="2.5" width="26" height="26" rx="3" fill="#dfe0e2" stroke="#cfd0d2"/><rect x="7" y="4" width="17" height="9" fill="#f4f4f4"/><path d="M9 6.5 H22 M9 9 H22" stroke="#d8d8d8"/><rect x="8" y="18" width="14" height="10" fill="#efefef"/><g transform="translate(14 6) scale(0.8)"><path d="M20 1 L25 5 L8 27 L2 30 L3 23 Z" fill="#e5e5e0" stroke="#cfcfca" stroke-width="1"/><path d="M3 23 L8 27" stroke="#cfcfca"/></g></svg>
<svg class="a" style="left:468px;top:147px" width="32" height="32" viewBox="0 0 32 32"><path d="M6 3 C12 1 17 6 22 5 C28 4 30 8 29 12 C28 16 24 15 22 17 C18 20 12 16 7 17 C2 17 1 12 1 9 C1 5 3 3.5 6 3 Z" fill="#dfe1df" stroke="#c8c9c8" stroke-width="1.1" /><rect x="19" y="19" width="12" height="12" rx="2.2" fill="#cdcabf"/><g stroke="#fff" stroke-width="2.04" stroke-linecap="round"><path d="M25.0 20.68 V29.32 M21.2416 22.84 L28.7584 27.16 M21.2416 27.16 L28.7584 22.84"/></g><circle cx="25.0" cy="25.0" r="1.56" fill="#cdcabf"/></svg>
<svg class="a" style="left:511px;top:147px" width="32" height="32" viewBox="0 0 32 32"><rect x="3" y="3" width="7" height="7" fill="none" stroke="#c8c8c8" stroke-width="1.2"/><path d="M4 4 L9 9 M9 4 L4 9 M10 6.5 H25" stroke="#c8c8c8" stroke-width="1.2"/><path d="M6 10 L1 31" stroke="#c8c8c8" stroke-width="1"/><path d="M12 27 L25 14" stroke="#d5d3cc" stroke-width="4"/><path d="M14 12 L27 27" stroke="#d5d3cc" stroke-width="4"/><path d="M12 10 C13 7 17 7 18 10 L16 13 Z" fill="#d5d3cc"/></svg>
<svg class="a" style="left:551.0px;top:159px" width="14" height="8"><path d="M0 0 H14 L7.0 8 Z" fill="#999"/></svg>
<svg class="a" style="left:576px;top:147px" width="32" height="32" viewBox="0 0 32 32"><rect x="2.5" y="3.5" width="25" height="6" fill="#e7e6e0" stroke="#d6d5cf"/><rect x="2.5" y="13.5" width="25" height="6" fill="#e7e6e0" stroke="#d6d5cf"/><rect x="2.5" y="23.5" width="25" height="6" fill="#e7e6e0" stroke="#d6d5cf"/><g transform="translate(7 0) scale(1)"><path d="M20 1 L25 5 L8 27 L2 30 L3 23 Z" fill="#e5e5e0" stroke="#cfcfca" stroke-width="1"/><path d="M3 23 L8 27" stroke="#cfcfca"/></g></svg>
<svg class="a" style="left:617px;top:147px" width="32" height="32" viewBox="0 0 32 32"><rect x="2.5" y="3.5" width="18" height="19" fill="#e8e8e0" stroke="#ddd"/><path d="M6 6 H28" stroke="#e0cfcf" stroke-width="2.5"/><path d="M7 9 H27 L25 31 H9 Z" fill="#efe8e8" stroke="#dccaca" stroke-width="1.5"/><path d="M13 11 V29 M17 11 V29 M21 11 V29" stroke="#dccaca" stroke-width="1.2"/></svg>
<svg class="a" style="left:660px;top:147px" width="32" height="32" viewBox="0 0 32 32"><path d="M2 9 L28 25 M2 25 L28 9" stroke="#d8d8d8" stroke-width="1.4"/><circle cx="25" cy="9" r="3.5" fill="none" stroke="#e0c8c8" stroke-width="1.4"/><circle cx="25" cy="25" r="3.5" fill="none" stroke="#e0c8c8" stroke-width="1.4"/></svg>
<svg class="a" style="left:702px;top:147px" width="32" height="32" viewBox="0 0 32 32"><path d="M9 2.5 H19 L24 7.5 V24.5 H9 Z" fill="#f6f6f6" stroke="#d6d6d6"/><path d="M3 7.5 H13 L18 12.5 V29.5 H3 Z" fill="#f6f6f6" stroke="#d6d6d6"/><path d="M6 16 H15 M6 19 H15 M6 22 H15 M6 25 H15" stroke="#dadada"/></svg>
<svg class="a" style="left:743px;top:147px" width="32" height="32" viewBox="0 0 32 32"><rect x="3.5" y="3.5" width="20" height="26" rx="1.5" fill="#efefef" stroke="#d6d6d6"/><rect x="8" y="2" width="11" height="5" fill="#e6e6e6" stroke="#d6d6d6"/><path d="M8 12 H20 M8 15 H20 M8 18 H20 M8 21 H20 M8 24 H20" stroke="#dadada"/></svg>
<svg class="a" style="left:786px;top:147px" width="32" height="32" viewBox="0 0 32 32"><path d="M12 4 L3 12 L12 20 V15 C19 15 23 17 22 26 C27 21 27 10 12 9 Z" fill="#e5ddd8" stroke="#d8ccc6"/></svg>
<svg class="a" style="left:828px;top:147px" width="32" height="32" viewBox="0 0 32 32"><path d="M20 4 L29 12 L20 20 V15 C13 15 9 17 10 26 C5 21 5 10 20 9 Z" fill="#e6e6e6" stroke="#d8d8d8"/></svg>
<svg class="a" style="left:885px;top:156px" width="5" height="17"><rect x="0" y="0" width="1" height="1" fill="#9a9a9a"/><rect x="3" y="0" width="1" height="1" fill="#9a9a9a"/><rect x="0" y="3" width="1" height="1" fill="#9a9a9a"/><rect x="3" y="3" width="1" height="1" fill="#9a9a9a"/><rect x="0" y="6" width="1" height="1" fill="#9a9a9a"/><rect x="3" y="6" width="1" height="1" fill="#9a9a9a"/><rect x="0" y="9" width="1" height="1" fill="#9a9a9a"/><rect x="3" y="9" width="1" height="1" fill="#9a9a9a"/><rect x="0" y="12" width="1" height="1" fill="#9a9a9a"/><rect x="3" y="12" width="1" height="1" fill="#9a9a9a"/><rect x="0" y="15" width="1" height="1" fill="#9a9a9a"/><rect x="3" y="15" width="1" height="1" fill="#9a9a9a"/></svg>
<svg class="a" style="left:900px;top:147px" width="32" height="32" viewBox="0 0 32 32"><path d="M7 3.5 H29 V17.5 H7 L1.5 10.5 Z" fill="#e9e8df" stroke="#d5d3c6" stroke-width="1.2"/><text x="8" y="15" font-family="Liberation Sans" font-weight="bold" font-size="11" fill="#bdbbaf">abc</text></svg>
<svg class="a" style="left:944px;top:147px" width="32" height="32" viewBox="0 0 32 32"><circle cx="11" cy="11" r="9.5" fill="#e3e3dc"/><path d="M11 11 V1.5 A9.5 9.5 0 0 1 20 14 Z" fill="#d8e0d8"/><path d="M11 11 L20 14 A9.5 9.5 0 0 1 5 18 Z" fill="#e6d8d8"/><rect x="17" y="22" width="4" height="9" fill="#d8e2d8"/><rect x="22" y="15" width="4" height="16" fill="#d8d8d2"/><rect x="27" y="25" width="4" height="6" fill="#e8d8d8"/></svg>
<div class="a" style="left:989px;top:149.0px;width:1px;height:28px;background:#c8c8c8;"></div>
<svg class="a" style="left:1000px;top:147px" width="32" height="32" viewBox="0 0 32 32"><path d="M7 3.5 H29 V17.5 H7 L1.5 10.5 Z" fill="#dbe8f8" stroke="#5e93d1" stroke-width="1.2"/><text x="8" y="15" font-family="Liberation Sans" font-weight="bold" font-size="11" fill="#222">ab</text><path d="M24 17 V11 C24 9 27 9 27 11 V18" fill="none" stroke="#777" stroke-width="1"/><circle cx="25" cy="24" r="5.5" fill="#b41d1d"/><circle cx="23.5" cy="22.5" r="1.6" fill="#e87a7a"/></svg>
<svg class="a" style="left:1040px;top:147px" width="32" height="32" viewBox="0 0 32 32"><path d="M7 3.5 H29 V17.5 H7 L1.5 10.5 Z" fill="#e82222" stroke="#c01010" stroke-width="1.2"/><path d="M8.5 5.5 H27 V15.5 H8.5 L4 10.5 Z" fill="none" stroke="#fff" stroke-width="1"/><text x="8.5" y="15" font-family="Liberation Sans" font-weight="bold" font-size="11" fill="#fff">abc</text></svg>
<div class="a" style="left:1087px;top:149.0px;width:1px;height:28px;background:#c8c8c8;"></div>
<svg class="a" style="left:1097px;top:147px" width="32" height="32" viewBox="0 0 32 32"><path d="M7 3.5 H29 V17.5 H7 L1.5 10.5 Z" fill="#e9e8df" stroke="#d5d3c6" stroke-width="1.2"/><text x="8" y="15" font-family="Liberation Sans" font-weight="bold" font-size="11" fill="#bdbbaf">ab</text><path d="M23 17 V11 C23 9 26 9 26 11 V18" fill="none" stroke="#ccc" stroke-width="1"/><circle cx="24" cy="24" r="5.5" fill="#ddd2d2"/></svg>
<svg class="a" style="left:1139px;top:147px" width="32" height="32" viewBox="0 0 32 32"><path d="M7 3.5 H29 V17.5 H7 L1.5 10.5 Z" fill="#e9e8df" stroke="#d5d3c6" stroke-width="1.2"/><text x="8" y="15" font-family="Liberation Sans" font-weight="bold" font-size="11" fill="#bdbbaf">abc</text><path d="M12 24 C17 18 25 18 30 24 C25 30 17 30 12 24 Z" fill="#f4f4f4" stroke="#d8d8d8"/><circle cx="21" cy="24" r="3.5" fill="#e0e0e0"/></svg>
<svg class="a" style="left:1182px;top:147px" width="32" height="32" viewBox="0 0 32 32"><path d="M7 3.5 H29 V17.5 H7 L1.5 10.5 Z" fill="#e9e8df" stroke="#d5d3c6" stroke-width="1.2"/><text x="8" y="15" font-family="Liberation Sans" font-weight="bold" font-size="11" fill="#bdbbaf">abc</text><rect x="17" y="17" width="13" height="13" rx="2" fill="#d6d6d6"/><path d="M19 21 H24 V18.5 L28.5 23.5 L24 28.5 V26 H19 Z" fill="#fff"/></svg>
<svg class="a" style="left:1224px;top:147px" width="32" height="32" viewBox="0 0 32 32"><path d="M7 3.5 H29 V17.5 H7 L1.5 10.5 Z" fill="#e9e8df" stroke="#d5d3c6" stroke-width="1.2"/><text x="8" y="15" font-family="Liberation Sans" font-weight="bold" font-size="11" fill="#bdbbaf">abc</text><rect x="17" y="17" width="13" height="13" rx="2" fill="#d6d6d6"/><path d="M27 20 A5 5 0 1 0 27 27" fill="none" stroke="#fff" stroke-width="2"/></svg>
<svg class="a" style="left:1266px;top:147px" width="32" height="32" viewBox="0 0 32 32"><path d="M7 3.5 H29 V17.5 H7 L1.5 10.5 Z" fill="#e9e8df" stroke="#d5d3c6" stroke-width="1.2"/><text x="8" y="15" font-family="Liberation Sans" font-weight="bold" font-size="11" fill="#bdbbaf">abc</text><rect x="17" y="17" width="13" height="13" rx="2" fill="#d6d5cc"/><path d="M20 28 L27 20" stroke="#fff" stroke-width="2.5"/></svg>
<svg class="a" style="left:1323px;top:156px" width="5" height="17"><rect x="0" y="0" width="1" height="1" fill="#9a9a9a"/><rect x="3" y="0" width="1" height="1" fill="#9a9a9a"/><rect x="0" y="3" width="1" height="1" fill="#9a9a9a"/><rect x="3" y="3" width="1" height="1" fill="#9a9a9a"/><rect x="0" y="6" width="1" height="1" fill="#9a9a9a"/><rect x="3" y="6" width="1" height="1" fill="#9a9a9a"/><rect x="0" y="9" width="1" height="1" fill="#9a9a9a"/><rect x="3" y="9" width="1" height="1" fill="#9a9a9a"/><rect x="0" y="12" width="1" height="1" fill="#9a9a9a"/><rect x="3" y="12" width="1" height="1" fill="#9a9a9a"/><rect x="0" y="15" width="1" height="1" fill="#9a9a9a"/><rect x="3" y="15" width="1" height="1" fill="#9a9a9a"/></svg>
<svg class="a" style="left:1357px;top:156px" width="5" height="17"><rect x="0" y="0" width="1" height="1" fill="#9a9a9a"/><rect x="3" y="0" width="1" height="1" fill="#9a9a9a"/><rect x="0" y="3" width="1" height="1" fill="#9a9a9a"/><rect x="3" y="3" width="1" height="1" fill="#9a9a9a"/><rect x="0" y="6" width="1" height="1" fill="#9a9a9a"/><rect x="3" y="6" width="1" height="1" fill="#9a9a9a"/><rect x="0" y="9" width="1" height="1" fill="#9a9a9a"/><rect x="3" y="9" width="1" height="1" fill="#9a9a9a"/><rect x="0" y="12" width="1" height="1" fill="#9a9a9a"/><rect x="3" y="12" width="1" height="1" fill="#9a9a9a"/><rect x="0" y="15" width="1" height="1" fill="#9a9a9a"/><rect x="3" y="15" width="1" height="1" fill="#9a9a9a"/></svg>
<svg class="a" style="left:1375px;top:147px" width="32" height="32" viewBox="0 0 32 32"><path d="M15 2 C9 2 9 4 9 6 V9 H16 V10 H6 C3 10 2 13 2 16 C2 20 4 22 6 22 H9 V18 C9 15 11 14 14 14 H20 C22 14 23 12 23 10 V6 C23 3 20 2 15 2 Z" fill="#3b77b0"/><circle cx="12.5" cy="5.5" r="1.3" fill="#fff"/><path d="M16 30 C22 30 22 28 22 26 V23 H15 V22 H25 C28 22 29 19 29 16 C29 12 27 10 25 10 H23 V14 C23 17 21 18 18 18 H12 C10 18 9 20 9 22 V26 C9 29 12 30 16 30 Z" fill="#f7cf3a"/><path d="M20 22 L27 26 L20 30" fill="none" stroke="#333" stroke-width="1.4"/></svg>
<svg class="a" style="left:1416px;top:147px" width="32" height="32" viewBox="0 0 32 32"><rect x="0" y="0" width="32" height="32" fill="#eaea00"/><path d="M0 0 H14 L12 8 L16 14 L10 20 L12 32 H0 Z" fill="#e01818"/><path d="M16 14 L24 8 L30 12 L26 18 L18 20 Z" fill="#1a9a1a"/><path d="M12 20 L18 20 L18 26 L13 27 Z" fill="#2aa02a"/><path d="M22 0 H28 L26 5 Z" fill="#1a8a1a"/><path d="M26 26 L32 25 V32 H24 Z" fill="#9a48d8"/><path d="M0 0 H14 L12 8 L16 14 L10 20 L12 32 M16 14 L24 8 L30 12 L26 18 L18 20 L16 14" fill="none" stroke="#111" stroke-width="0.7"/></svg>
<svg class="a" style="left:1458px;top:147px" width="32" height="32" viewBox="0 0 32 32"><path d="M2 19 L16 27 L30 19 L30 22 L16 30 L2 22 Z" fill="#2f5f6a"/><path d="M2 14 C2 10 5 8 9 6 L16 3 L23 6 C27 8 30 10 30 14 V19 L16 27 L2 19 Z" fill="#7fb7c6"/><path d="M16 21 C12 15 14 7 22 3 C26 10 24 18 16 21 Z" fill="#8cc34a"/><path d="M12 22 C6 19 5 14 7 11 C12 12 14 17 12 22 Z" fill="#6aaa30"/></svg>
<svg class="a" style="left:1515px;top:156px" width="5" height="17"><rect x="0" y="0" width="1" height="1" fill="#9a9a9a"/><rect x="3" y="0" width="1" height="1" fill="#9a9a9a"/><rect x="0" y="3" width="1" height="1" fill="#9a9a9a"/><rect x="3" y="3" width="1" height="1" fill="#9a9a9a"/><rect x="0" y="6" width="1" height="1" fill="#9a9a9a"/><rect x="3" y="6" width="1" height="1" fill="#9a9a9a"/><rect x="0" y="9" width="1" height="1" fill="#9a9a9a"/><rect x="3" y="9" width="1" height="1" fill="#9a9a9a"/><rect x="0" y="12" width="1" height="1" fill="#9a9a9a"/><rect x="3" y="12" width="1" height="1" fill="#9a9a9a"/><rect x="0" y="15" width="1" height="1" fill="#9a9a9a"/><rect x="3" y="15" width="1" height="1" fill="#9a9a9a"/></svg>
<svg class="a" style="left:1532px;top:147px" width="32" height="32" viewBox="0 0 32 32"><rect x="2.5" y="2.5" width="23" height="27" fill="#6b9bd0" stroke="#1f2f44" stroke-width="1.2"/><rect x="2.5" y="2.5" width="6" height="27" fill="#223247"/><text x="12" y="21" font-family="Liberation Sans" font-size="15" fill="#fff">?</text></svg>
<svg class="a" style="left:13px;top:212px" width="5" height="17"><rect x="0" y="0" width="1" height="1" fill="#9a9a9a"/><rect x="3" y="0" width="1" height="1" fill="#9a9a9a"/><rect x="0" y="3" width="1" height="1" fill="#9a9a9a"/><rect x="3" y="3" width="1" height="1" fill="#9a9a9a"/><rect x="0" y="6" width="1" height="1" fill="#9a9a9a"/><rect x="3" y="6" width="1" height="1" fill="#9a9a9a"/><rect x="0" y="9" width="1" height="1" fill="#9a9a9a"/><rect x="3" y="9" width="1" height="1" fill="#9a9a9a"/><rect x="0" y="12" width="1" height="1" fill="#9a9a9a"/><rect x="3" y="12" width="1" height="1" fill="#9a9a9a"/><rect x="0" y="15" width="1" height="1" fill="#9a9a9a"/><rect x="3" y="15" width="1" height="1" fill="#9a9a9a"/></svg>
<svg class="a" style="left:30px;top:203px" width="32" height="32" viewBox="0 0 32 32"><path d="M2 2 L30 30 H2 Z" fill="#e3e0db" stroke="#cbc8c3" stroke-width="1.2"/><path d="M7 17 L14 24 H7 Z" fill="#f8f8f8" stroke="#cbc8c3"/><rect x="22" y="3" width="7" height="26" fill="#e9e8e0" stroke="#cbc8c3"/><path d="M25 7 H29 M26 11 H29 M25 15 H29 M26 19 H29" stroke="#cbc8c3"/></svg>
<svg class="a" style="left:72px;top:203px" width="32" height="32" viewBox="0 0 32 32"><path d="M5 26 C3 16 6 8 10 6 C15 3 19 3 23 3" fill="none" stroke="#d8d8d8" stroke-width="1.3" stroke-dasharray="2.5 2"/><rect x="7" y="4" width="4" height="4" fill="none" stroke="#d4d4d4"/><rect x="22" y="2" width="4" height="4" fill="none" stroke="#d4d4d4"/><rect x="4" y="25" width="4" height="4" fill="none" stroke="#d4d4d4"/></svg>
<svg class="a" style="left:112.0px;top:215px" width="14" height="8"><path d="M0 0 H14 L7.0 8 Z" fill="#999"/></svg>
<svg class="a" style="left:139px;top:203px" width="32" height="32" viewBox="0 0 32 32"><path d="M6 3 C12 1 17 6 22 5 C28 4 30 8 29 12 C28 16 24 15 22 17 C18 20 12 16 7 17 C2 17 1 12 1 9 C1 5 3 3.5 6 3 Z" fill="#dfe1df" stroke="#c8c9c8" stroke-width="1.1" /><rect x="16" y="17" width="14" height="14" rx="2" fill="#d4d4d4"/><path d="M18 22 H24 V19 L29 24 L24 29 V26 H18 Z" fill="#fff"/></svg>
<svg class="a" style="left:179.0px;top:215px" width="14" height="8"><path d="M0 0 H14 L7.0 8 Z" fill="#999"/></svg>
<svg class="a" style="left:204.0px;top:203px" width="32" height="32" viewBox="0 0 32 32"><path d="M6 3 C12 1 17 6 22 5 C28 4 30 8 29 12 C28 16 24 15 22 17 C18 20 12 16 7 17 C2 17 1 12 1 9 C1 5 3 3.5 6 3 Z" fill="#dfe1df" stroke="#c8c9c8" stroke-width="1.1" /><rect x="16" y="17" width="14" height="14" rx="2" fill="#d4d4d4"/><path d="M27 20 A5 5 0 1 0 26 28" fill="none" stroke="#fff" stroke-width="2"/></svg>
<svg class="a" style="left:245.9px;top:203px" width="32" height="32" viewBox="0 0 32 32"><path d="M6 3 C12 1 17 6 22 5 C28 4 30 8 29 12 C28 16 24 15 22 17 C18 20 12 16 7 17 C2 17 1 12 1 9 C1 5 3 3.5 6 3 Z" fill="#dfe1df" stroke="#c8c9c8" stroke-width="1.1" /><rect x="16" y="17" width="14" height="14" rx="2" fill="#d4d4d4"/><path d="M18 24 L21 20 V22 H25 V20 L28 24 L25 28 V26 H21 V28 Z" fill="#fff"/></svg>
<svg class="a" style="left:287.8px;top:203px" width="32" height="32" viewBox="0 0 32 32"><circle cx="10" cy="10" r="9" fill="#dfe1df" stroke="#c8c9c8"/><path d="M15 24 L19 16 H27 L31 24 L27 31 H19 Z" fill="#e4e5e8" stroke="#c8c9c8"/><path d="M10 10 L20 20 M20 20 V16 M20 20 H16" stroke="#c0c0c0" stroke-width="1.1"/></svg>
<svg class="a" style="left:329.7px;top:203px" width="32" height="32" viewBox="0 0 32 32"><path d="M6 3 C12 1 17 6 22 5 C28 4 30 8 29 12 C28 16 24 15 22 17 C18 20 12 16 7 17 C2 17 1 12 1 9 C1 5 3 3.5 6 3 Z" fill="#dfe1df" stroke="#c8c9c8" stroke-width="1.1" /><path d="M6 7 C9 5 14 6 15 9 C14 12 9 13 6 12 C4 11 4 8 6 7 Z" fill="#f5f5f5" stroke="#c8c9c8"/><rect x="17" y="18" width="12" height="12" rx="2.2" fill="#cdcabf"/><g stroke="#fff" stroke-width="2.04" stroke-linecap="round"><path d="M23.0 19.68 V28.32 M19.2416 21.84 L26.7584 26.16 M19.2416 26.16 L26.7584 21.84"/></g><circle cx="23.0" cy="24.0" r="1.56" fill="#cdcabf"/></svg>
<svg class="a" style="left:371.6px;top:203px" width="32" height="32" viewBox="0 0 32 32"><path d="M6 3 C12 1 17 6 22 5 C28 4 30 8 29 12 C28 16 24 15 22 17 C18 20 12 16 7 17 C2 17 1 12 1 9 C1 5 3 3.5 6 3 Z" fill="#dfe1df" stroke="#c8c9c8" stroke-width="1.1" /><path d="M8 18 C14 16 15 20 13 25 C11 30 5 31 2 30 C1 26 4 20 8 18 Z" fill="#dfe1df" stroke="#c8c9c8"/><rect x="18" y="18" width="12" height="12" rx="2.2" fill="#cdcabf"/><g stroke="#fff" stroke-width="2.04" stroke-linecap="round"><path d="M24.0 19.68 V28.32 M20.2416 21.84 L27.7584 26.16 M20.2416 26.16 L27.7584 21.84"/></g><circle cx="24.0" cy="24.0" r="1.56" fill="#cdcabf"/></svg>
<svg class="a" style="left:413.5px;top:203px" width="32" height="32" viewBox="0 0 32 32"><path d="M6 3 C12 1 17 6 22 5 C28 4 30 8 29 12 C28 16 24 15 22 17 C18 20 12 16 7 17 C2 17 1 12 1 9 C1 5 3 3.5 6 3 Z" fill="#dfe1df" stroke="#c8c9c8" stroke-width="1.1" /><path d="M6 7 C9 5 14 6 15 9 C14 12 9 13 6 12 C4 11 4 8 6 7 Z" fill="#e0e0e0" stroke="#c8c9c8"/><rect x="17" y="18" width="12" height="12" rx="2.2" fill="#cdcabf"/><g stroke="#fff" stroke-width="2.04" stroke-linecap="round"><path d="M23.0 19.68 V28.32 M19.2416 21.84 L26.7584 26.16 M19.2416 26.16 L26.7584 21.84"/></g><circle cx="23.0" cy="24.0" r="1.56" fill="#cdcabf"/></svg>
<svg class="a" style="left:455.4px;top:203px" width="32" height="32" viewBox="0 0 32 32"><path d="M6 3 C12 1 17 6 22 5 C28 4 30 8 29 12 C28 16 24 15 22 17 C18 20 12 16 7 17 C2 17 1 12 1 9 C1 5 3 3.5 6 3 Z" fill="#dfe1df" stroke="#c8c9c8" stroke-width="1.1" /><path d="M6 7 C9 5 14 6 15 9 C14 12 9 13 6 12 C4 11 4 8 6 7 Z" fill="#f5f5f5" stroke="#c8c9c8"/><rect x="19" y="19" width="12" height="12" rx="2" fill="#e6dcdc"/><path d="M22 22 L28 28 M28 22 L22 28" stroke="#fff" stroke-width="1.8"/></svg>
<svg class="a" style="left:497.3px;top:203px" width="32" height="32" viewBox="0 0 32 32"><path d="M6 3 C12 1 17 6 22 5 C28 4 30 8 29 12 C28 16 24 15 22 17 C18 20 12 16 7 17 C2 17 1 12 1 9 C1 5 3 3.5 6 3 Z" fill="#dfe1df" stroke="#c8c9c8" stroke-width="1.1" /><path d="M8 18 C14 16 15 20 13 25 C11 30 5 31 2 30 C1 26 4 20 8 18 Z" fill="#dfe1df" stroke="#c8c9c8"/><rect x="19" y="19" width="12" height="12" rx="2" fill="#e6dcdc"/><path d="M22 22 L28 28 M28 22 L22 28" stroke="#fff" stroke-width="1.8"/></svg>
<svg class="a" style="left:539.2px;top:203px" width="32" height="32" viewBox="0 0 32 32"><path d="M3 5 C9 1 14 5 20 4 C26 3 30 6 29 10 C28 14 22 13 19 15 C16 17 17 22 15 28 C13 31 9 31 8 28 C6 24 6 18 5 14 C3 11 1 8 3 5 Z" fill="#dfe1df" stroke="#c8c9c8" stroke-width="1.1"/><path d="M3 14 C8 12 14 13 20 11" fill="none" stroke="#c0c0c0" stroke-dasharray="2 2"/></svg>
<svg class="a" style="left:581.0999999999999px;top:203px" width="32" height="32" viewBox="0 0 32 32"><path d="M4 22 C2 15 8 11 14 9 C20 7 22 2 26 3 C31 5 32 11 27 15 C22 19 19 21 14 26 C10 30 6 28 4 22 Z" fill="#e0e2e0" stroke="#c8c9c8" stroke-width="1.2"/><path d="M7 22 C6 16 11 14 15 12 C20 10 23 6 26 7 C29 9 28 12 25 14 C20 18 17 20 14 23 C11 26 8 25 7 22 Z" fill="none" stroke="#d9d4c9" stroke-width="1.4"/></svg>
<svg class="a" style="left:623.0px;top:203px" width="32" height="32" viewBox="0 0 32 32"><path d="M3 3 L11 20 L19 10 H28" fill="none" stroke="#d0d0d0" stroke-width="1.4"/><g fill="#f4f4f4" stroke="#d0d0d0"><rect x="1" y="1" width="4" height="4"/><rect x="9" y="18" width="4" height="4"/><rect x="17" y="8" width="4" height="4"/><rect x="26" y="8" width="4" height="4"/></g><rect x="17" y="17" width="14" height="14" rx="2" fill="#d4d4d4"/><path d="M20 22 A4 4 0 0 1 27 21 M27 25 A4 4 0 0 1 20 26" fill="none" stroke="#fff" stroke-width="1.8"/></svg>
<svg class="a" style="left:664.9px;top:203px" width="32" height="32" viewBox="0 0 32 32"><path d="M16 1 V31 M2 17 H31" stroke="#dddddd" stroke-width="2.5"/><g fill="#f4f4f4" stroke="#cfcfcf"><rect x="13" y="14" width="6" height="6"/><rect x="21" y="14" width="6" height="6"/></g><path d="M16 20 V27 M24 20 V30" stroke="#e0c8c8"/><rect x="22" y="2" width="9" height="9" rx="2.2" fill="#cdcabf"/><g stroke="#fff" stroke-width="1.60" stroke-linecap="round"><path d="M26.5 3.2600000000000002 V9.74 M23.6812 4.88 L29.3188 8.12 M23.6812 8.12 L29.3188 4.88"/></g><circle cx="26.5" cy="6.5" r="1.17" fill="#cdcabf"/><rect x="2" y="21" width="9" height="9" rx="2" fill="#e6dcdc"/><path d="M5 24 L8 27 M8 24 L5 27" stroke="#fff" stroke-width="1.8"/></svg>
<svg class="a" style="left:706.8px;top:203px" width="32" height="32" viewBox="0 0 32 32"><path d="M4 4 C8 1 12 3 14 6 C16 3 21 1 25 4 C29 7 27 13 23 14 C20 15 17 13 15 12 C13 13 10 15 7 14 C3 13 1 7 4 4 Z" fill="#e2e3e2" stroke="#c8c9c8"/><path d="M12 10 L20 26 M18 10 L10 26" stroke="#cfcfcf" stroke-width="1.3"/><circle cx="9" cy="28" r="2.5" fill="none" stroke="#e0c4c4" stroke-width="1.3"/><circle cx="21" cy="28" r="2.5" fill="none" stroke="#e0c4c4" stroke-width="1.3"/></svg>
<svg class="a" style="left:748.6999999999999px;top:203px" width="32" height="32" viewBox="0 0 32 32"><path d="M4 4 C8 1 12 3 14 6 C16 3 21 1 25 4 C29 7 27 13 23 14 C20 15 17 13 15 12 C13 13 10 15 7 14 C3 13 1 7 4 4 Z" fill="#e2e3e2" stroke="#c8c9c8"/><path d="M12 10 L20 26 M18 10 L10 26" stroke="#cfcfcf" stroke-width="1.3"/><circle cx="9" cy="28" r="2.5" fill="none" stroke="#e0c4c4" stroke-width="1.3"/><circle cx="21" cy="28" r="2.5" fill="none" stroke="#e0c4c4" stroke-width="1.3"/></svg>
<svg class="a" style="left:790.6px;top:203px" width="32" height="32" viewBox="0 0 32 32"><path d="M4 4 C8 1 12 3 14 6 C16 3 21 1 25 4 C29 7 27 13 23 14 C20 15 17 13 15 12 C13 13 10 15 7 14 C3 13 1 7 4 4 Z" fill="#e2e3e2" stroke="#c8c9c8"/><path d="M13 7 V12 M17 7 V12 M21 7 V12" stroke="#d0d0d0"/><path d="M14 13 C12 20 14 25 20 29" fill="none" stroke="#cfcfcf" stroke-width="1.3"/></svg>
<svg class="a" style="left:832.5px;top:203px" width="32" height="32" viewBox="0 0 32 32"><path d="M2 6 H30 M2 16 H30 M2 26 H30" stroke="#dcdcdc" stroke-width="1" stroke-dasharray="3 1"/><path d="M9 9 C12 4 20 4 23 9 M9 23 C12 28 20 28 23 23 M16 2 V30" fill="none" stroke="#cfcfcf" stroke-width="1.2"/></svg>
<svg class="a" style="left:874.4px;top:203px" width="32" height="32" viewBox="0 0 32 32"><path d="M8 28 C3 22 4 12 12 9" fill="none" stroke="#cfcfcf" stroke-width="1.3"/><path d="M12 5 L12 13 L16 9 Z" fill="#cfcfcf"/><path d="M16 3 L29 12 L16 17 Z" fill="#e6e6e6" stroke="#d4d4d4"/><path d="M16 3 V31 M10 31 L16 20 L22 31 Z" fill="none" stroke="#d4d4d4"/></svg>
<svg class="a" style="left:917.0px;top:215px" width="14" height="8"><path d="M0 0 H14 L7.0 8 Z" fill="#999"/></svg>
<svg class="a" style="left:13px;top:277px" width="5" height="17"><rect x="0" y="0" width="1" height="1" fill="#9a9a9a"/><rect x="3" y="0" width="1" height="1" fill="#9a9a9a"/><rect x="0" y="3" width="1" height="1" fill="#9a9a9a"/><rect x="3" y="3" width="1" height="1" fill="#9a9a9a"/><rect x="0" y="6" width="1" height="1" fill="#9a9a9a"/><rect x="3" y="6" width="1" height="1" fill="#9a9a9a"/><rect x="0" y="9" width="1" height="1" fill="#9a9a9a"/><rect x="3" y="9" width="1" height="1" fill="#9a9a9a"/><rect x="0" y="12" width="1" height="1" fill="#9a9a9a"/><rect x="3" y="12" width="1" height="1" fill="#9a9a9a"/><rect x="0" y="15" width="1" height="1" fill="#9a9a9a"/><rect x="3" y="15" width="1" height="1" fill="#9a9a9a"/></svg>
<svg class="a" style="left:30px;top:268px" width="32" height="32" viewBox="0 0 32 32"><rect x="2.5" y="3.5" width="25" height="24" fill="#e4e3df" stroke="#cdcbc6" stroke-dasharray="2 1.5"/><rect x="5" y="6" width="16" height="15" fill="#dcdbd6"/><path d="M16 14 V31 L20 27 L23.5 32 L26 30.5 L22.5 26 L28 25.5 Z" fill="#f4f4f4" stroke="#b0b0b0" stroke-width="1"/></svg>
<svg class="a" style="left:71.0px;top:280px" width="14" height="8"><path d="M0 0 H14 L7.0 8 Z" fill="#999"/></svg>
<svg class="a" style="left:96px;top:268px" width="32" height="32" viewBox="0 0 32 32"><rect x="2.5" y="2.5" width="19" height="17" fill="#ececec" stroke="#d8d8d8"/><rect x="9.5" y="11.5" width="19" height="17" fill="#e6e6e0" stroke="#d8d8d8"/><path d="M5 7 H19 M5 12 H19" stroke="#d8d8d8" stroke-width="2"/></svg>
<svg class="a" style="left:136.0px;top:280px" width="14" height="8"><path d="M0 0 H14 L7.0 8 Z" fill="#999"/></svg>
<svg class="a" style="left:163px;top:268px" width="32" height="32" viewBox="0 0 32 32"><rect x="2.5" y="2.5" width="15" height="15" fill="#fae35a" stroke="#c8a82a"/><rect x="8.5" y="8.5" width="15" height="15" fill="#fae35a" stroke="#c8a82a"/><rect x="19" y="19" width="12" height="12" rx="2" fill="#d42a2a"/><circle cx="25" cy="25" r="3.6" fill="none" stroke="#fff" stroke-width="1.6"/><path d="M27.5 22.5 L22.5 27.5" stroke="#fff" stroke-width="1.6"/></svg>
<svg class="a" style="left:203.0px;top:280px" width="14" height="8"><path d="M0 0 H14 L7.0 8 Z" fill="#444"/></svg>
<svg class="a" style="left:229px;top:268px" width="32" height="32" viewBox="0 0 32 32"><rect x="2.5" y="2.5" width="20" height="20" fill="#fae35a" stroke="#c8a82a" stroke-width="1.1"/><path d="M25 31 L21 24 A4.5 4.5 0 1 1 29 24 Z" fill="#6b9bd0" stroke="#3f6ca0"/><circle cx="25" cy="22" r="1.6" fill="#fff"/></svg>
<svg class="a" style="left:284px;top:277px" width="5" height="17"><rect x="0" y="0" width="1" height="1" fill="#9a9a9a"/><rect x="3" y="0" width="1" height="1" fill="#9a9a9a"/><rect x="0" y="3" width="1" height="1" fill="#9a9a9a"/><rect x="3" y="3" width="1" height="1" fill="#9a9a9a"/><rect x="0" y="6" width="1" height="1" fill="#9a9a9a"/><rect x="3" y="6" width="1" height="1" fill="#9a9a9a"/><rect x="0" y="9" width="1" height="1" fill="#9a9a9a"/><rect x="3" y="9" width="1" height="1" fill="#9a9a9a"/><rect x="0" y="12" width="1" height="1" fill="#9a9a9a"/><rect x="3" y="12" width="1" height="1" fill="#9a9a9a"/><rect x="0" y="15" width="1" height="1" fill="#9a9a9a"/><rect x="3" y="15" width="1" height="1" fill="#9a9a9a"/></svg>
<svg class="a" style="left:302px;top:268px" width="32" height="32" viewBox="0 0 32 32"><path d="M16 1 L30 10 L26 28 H6 L2 10 Z" fill="#2a9a3a"/><path d="M16 6 L25 12 L22 24 H10 L7 12 Z" fill="#8cc650"/><path d="M16 11 L21 14 L19 21 H13 L11 14 Z" fill="#ee9ae0"/></svg>
<svg class="a" style="left:359px;top:277px" width="5" height="17"><rect x="0" y="0" width="1" height="1" fill="#9a9a9a"/><rect x="3" y="0" width="1" height="1" fill="#9a9a9a"/><rect x="0" y="3" width="1" height="1" fill="#9a9a9a"/><rect x="3" y="3" width="1" height="1" fill="#9a9a9a"/><rect x="0" y="6" width="1" height="1" fill="#9a9a9a"/><rect x="3" y="6" width="1" height="1" fill="#9a9a9a"/><rect x="0" y="9" width="1" height="1" fill="#9a9a9a"/><rect x="3" y="9" width="1" height="1" fill="#9a9a9a"/><rect x="0" y="12" width="1" height="1" fill="#9a9a9a"/><rect x="3" y="12" width="1" height="1" fill="#9a9a9a"/><rect x="0" y="15" width="1" height="1" fill="#9a9a9a"/><rect x="3" y="15" width="1" height="1" fill="#9a9a9a"/></svg>
<svg class="a" style="left:376px;top:268px" width="32" height="32" viewBox="0 0 32 32"><path d="M3 2 V29 H31" fill="none" stroke="#444" stroke-width="1.3"/><path d="M1 5 L3 1 L5 5 M28 27 L31 29 L28 31" fill="none" stroke="#444"/><path d="M6 24 C12 22 16 20 18 14 C20 8 24 5 28 4" fill="none" stroke="#b0309a" stroke-width="1.4"/><path d="M6 27 C12 25 18 24 21 19 C24 14 26 14 30 13" fill="none" stroke="#2a8aaa" stroke-width="1.4"/></svg>
<svg class="a" style="left:432px;top:277px" width="5" height="17"><rect x="0" y="0" width="1" height="1" fill="#9a9a9a"/><rect x="3" y="0" width="1" height="1" fill="#9a9a9a"/><rect x="0" y="3" width="1" height="1" fill="#9a9a9a"/><rect x="3" y="3" width="1" height="1" fill="#9a9a9a"/><rect x="0" y="6" width="1" height="1" fill="#9a9a9a"/><rect x="3" y="6" width="1" height="1" fill="#9a9a9a"/><rect x="0" y="9" width="1" height="1" fill="#9a9a9a"/><rect x="3" y="9" width="1" height="1" fill="#9a9a9a"/><rect x="0" y="12" width="1" height="1" fill="#9a9a9a"/><rect x="3" y="12" width="1" height="1" fill="#9a9a9a"/><rect x="0" y="15" width="1" height="1" fill="#9a9a9a"/><rect x="3" y="15" width="1" height="1" fill="#9a9a9a"/></svg>
<svg class="a" style="left:450px;top:268px" width="32" height="32" viewBox="0 0 32 32"><rect x="0" y="0" width="32" height="32" fill="#c5d3e3"/><rect x="0" y="0" width="11" height="11" fill="#a6b2c3"/><rect x="21" y="0" width="11" height="11" fill="#a6b2c3"/><rect x="11" y="11" width="10" height="10" fill="#a6b2c3"/><rect x="0" y="21" width="11" height="11" fill="#a6b2c3"/><rect x="21" y="21" width="11" height="11" fill="#a6b2c3"/><path d="M6 28 L17 15 L20 18 L7 29 Z" fill="#333" stroke="#111"/><path d="M17 12 L22 7 C24 5 27 8 25 10 L20 15" fill="#1a1a1a"/><path d="M15 13 L22 20" stroke="#111" stroke-width="2.5"/></svg>
<div class="a" style="left:494px;top:274px;width:5px;height:20px;background:#d0d0d0;border-radius:2px"></div>
<svg class="a" style="left:509.0px;top:280px" width="14" height="8"><path d="M0 0 H14 L7.0 8 Z" fill="#999"/></svg>
<div class="t" style="left:531px;top:273.7px;font-size:24px;line-height:24px;color:#000;font-weight:400;font-style:normal;transform:scaleX(0.8291);">Band:</div>
<div class="a" style="left:588px;top:268px;width:51px;height:31px;background:linear-gradient(#fdfdfd,#f0f0f0);border:1px solid #b5b5b5;border-radius:2px"></div>
<div class="t" style="left:594px;top:273.7px;font-size:24px;line-height:24px;color:#6d6d6d;font-weight:400;font-style:normal;transform:scaleX(0.7485);">1</div>
<svg class="a" style="left:613.0px;top:281px" width="12" height="8"><path d="M0 0 H12 L6.0 8 Z" fill="#777"/></svg>
<div class="a" style="left:661px;top:274px;width:48px;height:20px;background:#fff;border:1px solid #3b8fe0;"></div>
<div class="a" style="left:666px;top:276px;width:24px;height:18px;background:#0078d7;"></div>
<div class="t" style="left:666px;top:274.4px;font-size:22px;line-height:22px;color:#fff;font-weight:400;font-style:normal;transform:scaleX(0.9802);">10</div>
<svg class="a" style="left:735px;top:268px" width="32" height="32" viewBox="0 0 32 32"><rect x="0" y="0" width="32" height="32" fill="#c5d3e3"/><rect x="0" y="0" width="11" height="11" fill="#a6b2c3"/><rect x="21" y="0" width="11" height="11" fill="#a6b2c3"/><rect x="11" y="11" width="10" height="10" fill="#a6b2c3"/><rect x="0" y="21" width="11" height="11" fill="#a6b2c3"/><rect x="21" y="21" width="11" height="11" fill="#a6b2c3"/><path d="M25 2 L30 6 L10 28 L2 31 L4 23 Z" fill="#f0d040" stroke="#8a7000" stroke-width="1"/><path d="M4 23 L10 28 L2 31 Z" fill="#e8d8b0" stroke="#555"/><path d="M22 5 L27 9" stroke="#999" stroke-width="2"/></svg>
<svg class="a" style="left:777px;top:268px" width="32" height="32" viewBox="0 0 32 32"><rect x="0" y="0" width="32" height="32" fill="#c5d3e3"/><rect x="0" y="0" width="11" height="11" fill="#a6b2c3"/><rect x="21" y="0" width="11" height="11" fill="#a6b2c3"/><rect x="11" y="11" width="10" height="10" fill="#a6b2c3"/><rect x="0" y="21" width="11" height="11" fill="#a6b2c3"/><rect x="21" y="21" width="11" height="11" fill="#a6b2c3"/><path d="M1 20 L13 16 L19 24 L8 31 L1 30 Z" fill="#5aae5a" stroke="#2a6a2a"/><path d="M12 7 L25 2 C29 1 31 6 28 9 L16 21 C13 23 10 21 10 17 Z" fill="#88c0e0" stroke="#1a3a5a" stroke-width="1.2"/><ellipse cx="27" cy="6" rx="3" ry="4.5" fill="#b8dcf0" stroke="#1a3a5a" transform="rotate(40 27 6)"/><path d="M12 4 C10 10 16 11 17 12" fill="none" stroke="#111"/></svg>
<svg class="a" style="left:819px;top:268px" width="32" height="32" viewBox="0 0 32 32"><rect x="0" y="0" width="32" height="32" fill="#c5d3e3"/><rect x="0" y="0" width="11" height="11" fill="#a6b2c3"/><rect x="21" y="0" width="11" height="11" fill="#a6b2c3"/><rect x="11" y="11" width="10" height="10" fill="#a6b2c3"/><rect x="0" y="21" width="11" height="11" fill="#a6b2c3"/><rect x="21" y="21" width="11" height="11" fill="#a6b2c3"/><path d="M2 20 L14 16 L18 26 L4 31 Z" fill="#f4f4f4" stroke="#111" stroke-dasharray="2 1.5"/><path d="M10 19 L24 3 L31 8 L17 25 Z" fill="#cf3a3a" stroke="#333"/><path d="M20 8 L24 3 L31 8 L27 13 Z" fill="#2a5ab0" stroke="#333"/></svg>
<svg class="a" style="left:861px;top:268px" width="32" height="32" viewBox="0 0 32 32"><rect x="0" y="0" width="32" height="32" fill="#c5d3e3"/><rect x="0" y="0" width="11" height="11" fill="#a6b2c3"/><rect x="21" y="0" width="11" height="11" fill="#a6b2c3"/><rect x="11" y="11" width="10" height="10" fill="#a6b2c3"/><rect x="0" y="21" width="11" height="11" fill="#a6b2c3"/><rect x="21" y="21" width="11" height="11" fill="#a6b2c3"/><text x="7" y="27" font-family="Liberation Serif" font-size="30" fill="#6a3a8a">ε</text></svg>
<svg class="a" style="left:903px;top:268px" width="32" height="32" viewBox="0 0 32 32"><rect x="0" y="0" width="32" height="32" fill="#c5d3e3"/><rect x="0" y="0" width="11" height="11" fill="#a6b2c3"/><rect x="21" y="0" width="11" height="11" fill="#a6b2c3"/><rect x="11" y="11" width="10" height="10" fill="#a6b2c3"/><rect x="0" y="21" width="11" height="11" fill="#a6b2c3"/><rect x="21" y="21" width="11" height="11" fill="#a6b2c3"/><path d="M1 16 C5 16 7 3 10 3 C13 3 13 30 17 30 C21 30 21 16 31 16" fill="none" stroke="#e02020" stroke-width="1.8"/><path d="M1 16 H9 C12 16 13 22 16 22 C19 22 20 13 23 13 C25 13 26 16 31 16" fill="none" stroke="#1a30d0" stroke-width="2"/></svg>
<svg class="a" style="left:945px;top:268px" width="32" height="32" viewBox="0 0 32 32"><rect x="0" y="0" width="32" height="32" fill="#c5d3e3"/><rect x="0" y="0" width="11" height="11" fill="#a6b2c3"/><rect x="21" y="0" width="11" height="11" fill="#a6b2c3"/><rect x="11" y="11" width="10" height="10" fill="#a6b2c3"/><rect x="0" y="21" width="11" height="11" fill="#a6b2c3"/><rect x="21" y="21" width="11" height="11" fill="#a6b2c3"/><path d="M14 6 L2 15 L14 23 V18 C21 18 25 19 24 28 C30 23 29 12 14 11 Z" fill="#f39a4a" stroke="#d07020" stroke-width="0.8"/></svg>
<svg class="a" style="left:987px;top:268px" width="32" height="32" viewBox="0 0 32 32"><rect x="0" y="0" width="32" height="32" fill="#ececec"/><path d="M18 6 L30 15 L18 23 V18 C11 18 7 19 8 28 C2 23 3 12 18 11 Z" fill="#e4e4e4" stroke="#dadada" stroke-width="0.8"/></svg>
<svg class="a" style="left:1029px;top:268px" width="32" height="32" viewBox="0 0 32 32"><rect x="0" y="0" width="32" height="32" fill="#c5d3e3"/><rect x="0" y="0" width="11" height="11" fill="#a6b2c3"/><rect x="21" y="0" width="11" height="11" fill="#a6b2c3"/><rect x="11" y="11" width="10" height="10" fill="#a6b2c3"/><rect x="0" y="21" width="11" height="11" fill="#a6b2c3"/><rect x="21" y="21" width="11" height="11" fill="#a6b2c3"/><path d="M5 3 C2 6 3 10 6 11 L22 27 C24 29 27 27 26 25 L10 8 C10 4 8 2 5 3 L8 6 L6 8 Z" fill="#e8d070" stroke="#222" stroke-width="1.1"/><path d="M27 3 L30 6 L12 28 C10 30 7 29 6 27 Z" fill="#3a6ad0" stroke="#222" stroke-width="1"/><path d="M6 27 L11 22 L14 25 C11 29 9 30 6 27 Z" fill="#d03a3a" stroke="#222"/></svg>
<svg class="a" style="left:1071px;top:268px" width="32" height="32" viewBox="0 0 32 32"><rect x="0" y="0" width="32" height="32" fill="#c5d3e3"/><rect x="0" y="0" width="11" height="11" fill="#a6b2c3"/><rect x="21" y="0" width="11" height="11" fill="#a6b2c3"/><rect x="11" y="11" width="10" height="10" fill="#a6b2c3"/><rect x="0" y="21" width="11" height="11" fill="#a6b2c3"/><rect x="21" y="21" width="11" height="11" fill="#a6b2c3"/><path d="M2 31 L4 10 L9 3 L13 11 L18 10 L20 31 Z" fill="#707070"/><path d="M8 28 L22 12" stroke="#222" stroke-width="5" stroke-linecap="round"/><path d="M8 28 L22 12" stroke="#e8d070" stroke-width="3" stroke-linecap="round"/><path d="M21 5 C24 2 29 3 30 7 L27 8 L26 11 L29 12 C27 16 22 16 20 13 Z" fill="#ddd" stroke="#222"/></svg>
<svg class="a" style="left:1112px;top:268px" width="32" height="32" viewBox="0 0 32 32"><rect x="0.5" y="1.5" width="29" height="30" fill="#4a7aa8" stroke="#1a1a1a"/><rect x="0.5" y="1.5" width="6" height="30" fill="#2aae3a"/><path d="M6.5 1.5 V31.5" stroke="#1a1a1a" stroke-width="1.5"/><text x="13" y="24" font-family="Liberation Sans" font-weight="bold" font-size="19" fill="#fff">?</text></svg>
<svg class="a" style="left:1170px;top:277px" width="5" height="17"><rect x="0" y="0" width="1" height="1" fill="#9a9a9a"/><rect x="3" y="0" width="1" height="1" fill="#9a9a9a"/><rect x="0" y="3" width="1" height="1" fill="#9a9a9a"/><rect x="3" y="3" width="1" height="1" fill="#9a9a9a"/><rect x="0" y="6" width="1" height="1" fill="#9a9a9a"/><rect x="3" y="6" width="1" height="1" fill="#9a9a9a"/><rect x="0" y="9" width="1" height="1" fill="#9a9a9a"/><rect x="3" y="9" width="1" height="1" fill="#9a9a9a"/><rect x="0" y="12" width="1" height="1" fill="#9a9a9a"/><rect x="3" y="12" width="1" height="1" fill="#9a9a9a"/><rect x="0" y="15" width="1" height="1" fill="#9a9a9a"/><rect x="3" y="15" width="1" height="1" fill="#9a9a9a"/></svg>
<div class="t" style="left:1182px;top:274.4px;font-size:22px;line-height:22px;color:#000;font-weight:400;font-style:normal;transform:scaleX(0.9343);">≡</div>
<div class="a" style="left:1197px;top:274px;width:48px;height:20px;background:#fff;border:1px solid #b5b5b5;"></div>
<div class="t" style="left:1201px;top:273.7px;font-size:24px;line-height:24px;color:#000;font-weight:400;font-style:normal;transform:scaleX(0.6995);">1.</div>
<svg class="a" style="left:1224px;top:276px" width="16" height="20"><path d="M3 8 L8 3 L13 8 Z M3 12 L8 17 L13 12 Z" fill="#555"/></svg>
<div class="a" style="left:1218px;top:275px;width:1px;height:20px;background:#d0d0d0;"></div>
<div class="a" style="left:1249px;top:269px;width:151px;height:30px;background:#fff;border:1px solid #b5b5b5;border-radius:2px"></div>
<div class="t" style="left:1254px;top:274.7px;font-size:24px;line-height:24px;color:#000;font-weight:400;font-style:normal;transform:scaleX(0.8937);">map units</div>
<svg class="a" style="left:1374.0px;top:281px" width="12" height="8"><path d="M0 0 H12 L6.0 8 Z" fill="#555"/></svg>
<svg class="a" style="left:1408px;top:268px" width="32" height="32" viewBox="0 0 32 32"><rect x="0" y="0" width="32" height="32" fill="#d0dae6"/><rect x="0" y="0" width="11" height="11" fill="#b2bcc8"/><rect x="21" y="0" width="11" height="11" fill="#b2bcc8"/><rect x="11" y="11" width="10" height="10" fill="#b2bcc8"/><rect x="0" y="21" width="11" height="11" fill="#b2bcc8"/><rect x="21" y="21" width="11" height="11" fill="#b2bcc8"/><path d="M9 8 L4 16 L10 26" fill="none" stroke="#333" stroke-dasharray="2.5 2" stroke-width="1.1"/><path d="M13 4 V22 L17 18 L21 25 L24 23.5 L20 17 L26 16.5 Z" fill="#fff" stroke="#111" stroke-width="1.1"/></svg>
<div class="a" style="left:1446px;top:266px;width:38px;height:37px;background:#dcdcdc;border:1px solid #ababab;border-radius:2px"></div>
<svg class="a" style="left:1450px;top:268px" width="32" height="32" viewBox="0 0 32 32"><rect x="0" y="0" width="32" height="32" fill="#d0dae6"/><rect x="0" y="0" width="11" height="11" fill="#b2bcc8"/><rect x="21" y="0" width="11" height="11" fill="#b2bcc8"/><rect x="11" y="11" width="10" height="10" fill="#b2bcc8"/><rect x="0" y="21" width="11" height="11" fill="#b2bcc8"/><rect x="21" y="21" width="11" height="11" fill="#b2bcc8"/><path d="M3 4 L14 10 L27 3 L22 24 L12 29 L4 20 Z" fill="#e6e6e6" stroke="#333" stroke-width="1.1" stroke-dasharray="2.5 1.8"/><path d="M16 13 V30 L20 26 L23.5 32 L26 30.5 L22.5 25 L28 24.5 Z" fill="#fff" stroke="#111" stroke-width="1.1"/></svg>
<svg class="a" style="left:1492px;top:268px" width="32" height="32" viewBox="0 0 32 32"><rect x="0" y="0" width="32" height="32" fill="#d0dae6"/><rect x="0" y="0" width="11" height="11" fill="#b2bcc8"/><rect x="21" y="0" width="11" height="11" fill="#b2bcc8"/><rect x="11" y="11" width="10" height="10" fill="#b2bcc8"/><rect x="0" y="21" width="11" height="11" fill="#b2bcc8"/><rect x="21" y="21" width="11" height="11" fill="#b2bcc8"/><path d="M3 4 L14 10 L27 3 L22 24 L12 29 L4 20 Z" fill="#e6e6e6" stroke="#333" stroke-width="1.1" stroke-dasharray="2.5 1.8"/><rect x="19" y="19" width="13" height="13" rx="2.5" fill="#5a9b5e"/><path d="M25.5 21 V30 M21 25.5 H30" stroke="#fff" stroke-width="2.4"/></svg>
<svg class="a" style="left:1534px;top:268px" width="32" height="32" viewBox="0 0 32 32"><rect x="0" y="0" width="32" height="32" fill="#d0dae6"/><rect x="0" y="0" width="11" height="11" fill="#b2bcc8"/><rect x="21" y="0" width="11" height="11" fill="#b2bcc8"/><rect x="11" y="11" width="10" height="10" fill="#b2bcc8"/><rect x="0" y="21" width="11" height="11" fill="#b2bcc8"/><rect x="21" y="21" width="11" height="11" fill="#b2bcc8"/><path d="M3 4 L14 10 L27 3 L22 24 L12 29 L4 20 Z" fill="#e6e6e6" stroke="#333" stroke-width="1.1" stroke-dasharray="2.5 1.8"/><rect x="8" y="13" width="17" height="12" rx="1.5" fill="#6b9bd0" stroke="#2f4f77"/><path d="M11 10 V13 M14 10 V13 M17 10 V13 M20 10 V13 M11 25 V29 M14 25 V29 M17 25 V29 M20 25 V29" stroke="#2f4f77"/><rect x="21" y="21" width="10" height="10" rx="2.2" fill="#c9a60a"/><g stroke="#fff" stroke-width="1.70" stroke-linecap="round"><path d="M26.0 22.4 V29.6 M22.868000000000002 24.2 L29.131999999999998 27.8 M22.868000000000002 27.8 L29.131999999999998 24.2"/></g><circle cx="26.0" cy="26.0" r="1.30" fill="#c9a60a"/></svg>
<svg class="a" style="left:1576px;top:268px" width="32" height="32" viewBox="0 0 32 32"><rect x="0" y="0" width="32" height="32" fill="#d0dae6"/><rect x="0" y="0" width="11" height="11" fill="#b2bcc8"/><rect x="21" y="0" width="11" height="11" fill="#b2bcc8"/><rect x="11" y="11" width="10" height="10" fill="#b2bcc8"/><rect x="0" y="21" width="11" height="11" fill="#b2bcc8"/><rect x="21" y="21" width="11" height="11" fill="#b2bcc8"/><path d="M3 4 L14 10 L27 3 L22 24 L12 29 L4 20 Z" fill="#e6e6e6" stroke="#333" stroke-width="1.1" stroke-dasharray="2.5 1.8"/><rect x="18" y="18" width="13" height="13" rx="2" fill="#d42a2a"/><circle cx="24.5" cy="24.5" r="3.9" fill="none" stroke="#fff" stroke-width="1.6"/><path d="M27.1 21.9 L21.9 27.1" stroke="#fff" stroke-width="1.6"/></svg>
<div class="a" style="left:1614px;top:266px;width:38px;height:37px;background:#dcdcdc;border:1px solid #ababab;border-radius:2px"></div>
<svg class="a" style="left:1618px;top:268px" width="32" height="32" viewBox="0 0 32 32"><rect x="0" y="0" width="32" height="32" fill="#d0dae6"/><rect x="0" y="0" width="11" height="11" fill="#b2bcc8"/><rect x="21" y="0" width="11" height="11" fill="#b2bcc8"/><rect x="11" y="11" width="10" height="10" fill="#b2bcc8"/><rect x="0" y="21" width="11" height="11" fill="#b2bcc8"/><rect x="21" y="21" width="11" height="11" fill="#b2bcc8"/><rect x="10" y="0" width="12" height="32" fill="#e2c030"/><rect x="22" y="11" width="10" height="10" fill="#e2c030"/><path d="M6 4 L20 16 L6 28" fill="none" stroke="#333" stroke-dasharray="2.5 2" stroke-width="1.1"/></svg>
<div class="a" style="left:0px;top:323px;width:79px;height:1791px;background:linear-gradient(90deg,#f8f8f8,#eeeeee);"></div>
<div class="a" style="left:79px;top:323px;width:1px;height:1791px;background:#a8a8a8;"></div>
<div class="a" style="left:32px;top:336px;width:17px;height:4px;background-image:radial-gradient(circle,#b8b8b8 0.9px,transparent 1.1px);background-size:3px 3px"></div>
<svg class="a" style="left:12px;top:351px" width="32" height="32" viewBox="0 0 32 32"><path d="M4 5 L12 24 L20 6 L28 6" fill="none" stroke="#2a3f5a" stroke-width="1.6"/><g fill="#fff" stroke="#2a3f5a" stroke-width="1.5"><circle cx="4" cy="5" r="2.6"/><circle cx="12" cy="24" r="2.6"/><circle cx="20" cy="6" r="2.6"/><circle cx="28" cy="6" r="2.6"/></g><rect x="20" y="20" width="12" height="12" rx="2.5" fill="#5a9b5e"/><path d="M26.0 22 V30 M22 26.0 H30" stroke="#fff" stroke-width="2.4"/></svg>
<svg class="a" style="left:12px;top:392px" width="32" height="32" viewBox="0 0 32 32"><rect x="1" y="1" width="9.2" height="9.2" fill="#213a5c"/><rect x="10" y="1" width="9.2" height="9.2" fill="#6c9bd0"/><rect x="19" y="1" width="9.2" height="9.2" fill="#213a5c"/><rect x="1" y="10" width="9.2" height="9.2" fill="#6c9bd0"/><rect x="10" y="10" width="9.2" height="9.2" fill="#213a5c"/><rect x="19" y="10" width="9.2" height="9.2" fill="#6c9bd0"/><rect x="1" y="19" width="9.2" height="9.2" fill="#213a5c"/><rect x="10" y="19" width="9.2" height="9.2" fill="#6c9bd0"/><rect x="20" y="20" width="12" height="12" rx="2.5" fill="#5a9b5e"/><path d="M26.0 22 V30 M22 26.0 H30" stroke="#fff" stroke-width="2.4"/></svg>
<svg class="a" style="left:12px;top:434px" width="32" height="32" viewBox="0 0 32 32"><rect x="2" y="2" width="28" height="28" rx="2" fill="#6c9bd0" stroke="#2f4f77" stroke-width="1.2"/><path d="M2 16 H30 M16 2 V30 M2 2 L16 16 M16 2 L2 16 M16 16 L30 2 M2 23 H16 M9 16 V30" stroke="#1f2f44" stroke-width="1.1"/><rect x="3" y="3" width="12" height="12" fill="#dce8f5" opacity="0.5"/><rect x="20" y="20" width="12" height="12" rx="2.5" fill="#5a9b5e"/><path d="M26.0 22 V30 M22 26.0 H30" stroke="#fff" stroke-width="2.4"/></svg>
<svg class="a" style="left:12px;top:475px" width="32" height="32" viewBox="0 0 32 32"><path d="M8 4 C14 3 16 8 14 13 C12 18 8 20 4 21 L5 19 C9 17 10 15 10 13 C6 13 4 10 5 7 C6 5 7 4 8 4 Z" fill="#4f7fb8" stroke="#2f4f77" stroke-width="0.8"/><rect x="20" y="20" width="12" height="12" rx="2.5" fill="#5a9b5e"/><path d="M26.0 22 V30 M22 26.0 H30" stroke="#fff" stroke-width="2.4"/></svg>
<svg class="a" style="left:12px;top:515px" width="32" height="32" viewBox="0 0 32 32"><path d="M2 31 C5 22 12 10 29 2 C25 12 20 22 7 26 Z" fill="#86aee0" stroke="#2f4f77" stroke-width="1"/><path d="M4 29 L26 5 M9 23 L14 23 M12 19 L18 18 M16 15 L22 14" stroke="#fff" stroke-width="0.8"/><rect x="20" y="20" width="12" height="12" rx="2.5" fill="#5a9b5e"/><path d="M26.0 22 V30 M22 26.0 H30" stroke="#fff" stroke-width="2.4"/></svg>
<svg class="a" style="left:12px;top:557px" width="32" height="32" viewBox="0 0 32 32"><rect x="2.5" y="2.5" width="26" height="27" rx="3" fill="#bcd0ea" stroke="#3f5f88" stroke-width="1.2"/><path d="M5 4 L12 24 L20 5 L26 4" fill="none" stroke="#2f4f77" stroke-width="1.6"/><g fill="#fff" stroke="#2f4f77" stroke-width="1.3"><circle cx="5" cy="4" r="2.2"/><circle cx="12" cy="24" r="2.5"/><circle cx="20" cy="5" r="2.2"/><circle cx="26" cy="4" r="2.2"/></g><rect x="20" y="20" width="12" height="12" rx="2.5" fill="#5a9b5e"/><path d="M26.0 22 V30 M22 26.0 H30" stroke="#fff" stroke-width="2.4"/></svg>
<svg class="a" style="left:12px;top:597px" width="32" height="32" viewBox="0 0 32 32"><path d="M6 2 C2 3 1 8 2 12 C3 16 5 18 8 17 C9 21 11 25 14 30 C17 31 19 29 18 26 C17 22 17 19 18 17 C21 18 24 19 26 18 L29 19 C31 17 29 14 27 14 C28 10 29 5 25 2 C20 0 15 2 14 3 C11 1 8 1 6 2 Z" fill="#4f7fb8" stroke="#1f3f68" stroke-width="1.1"/><path d="M14 3 C12 6 12 10 14 14 M20 6 C22 8 22 12 20 14" fill="none" stroke="#1f3f68" stroke-width="1"/><rect x="20" y="20" width="12" height="12" rx="2.5" fill="#5a9b5e"/><path d="M26.0 22 V30 M22 26.0 H30" stroke="#fff" stroke-width="2.4"/></svg>
<svg class="a" style="left:12px;top:638px" width="32" height="32" viewBox="0 0 32 32"><circle cx="15" cy="15" r="13" fill="#9ebfe6" stroke="#3f6ca0" stroke-width="1.2"/><path d="M7 10 C10 8 12 11 11 14 C9 17 11 20 10 23 M17 6 C20 7 23 9 21 12 C19 14 22 17 24 18" fill="none" stroke="#213a5c" stroke-width="2.8"/><path d="M2 15 H28 M15 2 C9 8 9 22 15 28 M15 2 C21 8 21 22 15 28" fill="none" stroke="#dbe6f4" stroke-width="0.7"/><rect x="20" y="20" width="12" height="12" rx="2.5" fill="#5a9b5e"/><path d="M26.0 22 V30 M22 26.0 H30" stroke="#fff" stroke-width="2.4"/></svg>
<svg class="a" style="left:12px;top:679px" width="32" height="32" viewBox="0 0 32 32"><circle cx="15" cy="15" r="13" fill="#2a4a72" stroke="#1a2a44" stroke-width="1.2"/><path d="M2 11 H28 M2 19 H28" stroke="#fff" stroke-width="2.2"/><path d="M15 2 C9 8 9 22 15 28 M15 2 C21 8 21 22 15 28" fill="none" stroke="#fff" stroke-width="1.6"/><rect x="4" y="12" width="22" height="6" fill="#6c9bd0" opacity="0.8"/><rect x="20" y="20" width="12" height="12" rx="2.5" fill="#5a9b5e"/><path d="M26.0 22 V30 M22 26.0 H30" stroke="#fff" stroke-width="2.4"/></svg>
<svg class="a" style="left:12px;top:720px" width="32" height="32" viewBox="0 0 32 32"><circle cx="15" cy="15" r="13" fill="#dce8f5" stroke="#5f8fc6" stroke-width="1.4"/><path d="M2 15 H28 M15 2 C9 8 9 22 15 28 M15 2 C21 8 21 22 15 28 M4 8 H26 M4 22 H26" fill="none" stroke="#5f8fc6" stroke-width="1"/><path d="M6 6 L12 22 L19 7 L25 6" fill="none" stroke="#1f2f44" stroke-width="1.5"/><g fill="#fff" stroke="#1f2f44" stroke-width="1.2"><circle cx="6" cy="6" r="2"/><circle cx="12" cy="22" r="2.2"/><circle cx="19" cy="7" r="2"/><circle cx="25" cy="6" r="2"/></g><rect x="20" y="20" width="12" height="12" rx="2.5" fill="#5a9b5e"/><path d="M26.0 22 V30 M22 26.0 H30" stroke="#fff" stroke-width="2.4"/></svg>
<svg class="a" style="left:12px;top:761px" width="32" height="32" viewBox="0 0 32 32"><path d="M4 5 L12 24 L20 6 L28 6" fill="none" stroke="#2a3f5a" stroke-width="1.6"/><g fill="#fff" stroke="#2a3f5a" stroke-width="1.5"><circle cx="4" cy="5" r="2.6"/><circle cx="12" cy="24" r="2.6"/><circle cx="20" cy="6" r="2.6"/><circle cx="28" cy="6" r="2.6"/></g><rect x="20" y="20" width="11" height="11" rx="2.2" fill="#c9a60a"/><g stroke="#fff" stroke-width="1.87" stroke-linecap="round"><path d="M25.5 21.54 V29.46 M22.0548 23.52 L28.9452 27.48 M22.0548 27.48 L28.9452 23.52"/></g><circle cx="25.5" cy="25.5" r="1.43" fill="#c9a60a"/></svg>
<svg class="a" style="left:53.0px;top:610px" width="14" height="8"><path d="M0 0 H14 L7.0 8 Z" fill="#555"/></svg>
<svg class="a" style="left:53.0px;top:774px" width="14" height="8"><path d="M0 0 H14 L7.0 8 Z" fill="#555"/></svg>
<div class="a" style="left:80px;top:323px;width:709px;height:1791px;background:#f0f0f0;"></div>
<div class="t" style="left:85px;top:327.7px;font-size:24px;line-height:24px;color:#000;font-weight:400;font-style:normal;transform:scaleX(0.9428);">Browser</div>
<svg class="a" style="left:746px;top:332px" width="30" height="13"><rect x="0.5" y="0.5" width="11" height="11" rx="2" fill="none" stroke="#777"/><rect x="3" y="5" width="4" height="4" fill="none" stroke="#777"/><path d="M5 3 H9 V7" fill="none" stroke="#777"/><rect x="16.5" y="0.5" width="11" height="11" rx="2" fill="none" stroke="#777"/><path d="M19 3 L25 9 M25 3 L19 9" stroke="#666" stroke-width="1.8"/></svg>
<svg class="a" style="left:93px;top:364px" width="22" height="22" viewBox="0 0 32 32"><rect x="3" y="3" width="20" height="20" fill="#eeeeee" stroke="#8c8c8c" stroke-width="1.8"/><rect x="18" y="18" width="13" height="13" rx="2.5" fill="#5a9b5e"/><path d="M24.5 20 V29 M20 24.5 H29" stroke="#fff" stroke-width="2.4"/></svg>
<svg class="a" style="left:127px;top:364px" width="22" height="22" viewBox="0 0 32 32"><path d="M3 17 C3 9 9 4 16 4 C20 4 23 5.5 25.5 8 L29.5 4 V15.5 H18 L22 11.5 C20.5 10 18.5 9 16 9 C11.5 9 8.5 12.5 8.5 17 Z" fill="#4a86cc" stroke="#3a6eb0" stroke-width="0.6"/><path d="M29 15 C29 23 23 28 16 28 C12 28 9 26.5 6.5 24 L2.5 28 V16.5 H14 L10 20.5 C11.5 22 13.5 23 16 23 C20.5 23 23.5 19.5 23.5 15 Z" fill="#5b94d6" stroke="#3a6eb0" stroke-width="0.6"/></svg>
<svg class="a" style="left:161px;top:364px" width="22" height="22" viewBox="0 0 32 32"><rect x="3" y="2" width="26" height="5" fill="#f5e35a" stroke="#6c9bd0" stroke-width="1"/><path d="M3 8 H29 L19 18 V30 L13 27 V18 Z" fill="#6c9bd0" stroke="#3f6ca0" stroke-width="1"/></svg>
<svg class="a" style="left:195px;top:364px" width="22" height="22" viewBox="0 0 32 32"><path d="M3 5 H26 M5 5 V30" stroke="#bdbdbd" stroke-width="1.5"/><rect x="6" y="11" width="6" height="6" fill="#f7a020"/><rect x="6" y="22" width="6" height="6" fill="#f7a020"/><path d="M18 2 L28 12 H22 V28 H15 V12 H9 Z" fill="#5f8fc6" stroke="#2f4f77" stroke-width="1"/></svg>
<svg class="a" style="left:229px;top:364px" width="22" height="22" viewBox="0 0 32 32"><circle cx="16" cy="16" r="14" fill="#5d8fce" stroke="#3f6ca0" stroke-width="1"/><text x="12" y="25" font-family="Liberation Serif" font-style="italic" font-weight="bold" font-size="20" fill="#fff">i</text></svg>
<div class="a" style="left:80px;top:399px;width:694px;height:445px;background:#fff;border:1px solid #a0a0a0;"></div>
<div class="a" style="left:747px;top:399px;width:29px;height:447px;background:#b4b4b4;"></div>
<div class="a" style="left:748px;top:400px;width:27px;height:445px;background:linear-gradient(90deg,#fdfdfd,#f1f1f1);"></div>
<div class="a" style="left:748px;top:668px;width:27px;height:149px;background:#e3e3e3;"></div>
<div class="a" style="left:748px;top:668px;width:27px;height:1px;background:#b8b8b8;"></div>
<div class="a" style="left:748px;top:817px;width:27px;height:1px;background:#b8b8b8;"></div>
<div class="a" style="left:748px;top:427px;width:27px;height:1px;background:#c0c0c0;"></div>
<div class="a" style="left:748px;top:817px;width:27px;height:1px;background:#c0c0c0;"></div>
<svg class="a" style="left:753px;top:409px" width="16" height="10"><path d="M0 9 L8 1 L16 9 Z" fill="#606060"/></svg>
<svg class="a" style="left:753px;top:827px" width="16" height="10"><path d="M0 1 L16 1 L8 9 Z" fill="#606060"/></svg>
<svg class="a" style="left:111px;top:400.5px" width="32" height="32" viewBox="0 0 32 32"><path d="M16 1.5 L20 11.5 L30.5 12 L22.5 19 L25.5 30 L16 24 L6.5 30 L9.5 19 L1.5 12 L12 11.5 Z" fill="#fbee5a" stroke="#d4a90c" stroke-width="1.6" stroke-linejoin="round"/></svg>
<div class="t" style="left:150px;top:406.7px;font-size:24px;line-height:24px;color:#000;font-weight:400;font-style:normal;transform:scaleX(0.9422);">Favorites</div>
<svg class="a" style="left:87px;top:446.0px" width="16" height="10"><path d="M0 1 L16 1 L8 9 Z" fill="#555"/></svg>
<svg class="a" style="left:111px;top:434.5px" width="32" height="32" viewBox="0 0 32 32"><path d="M3 4 C3 1 7 1 7 4 H27 V29 H7 V31 C7 32.5 3 32.5 3 31 Z" fill="#e6e6e6" stroke="#8e8e8e" stroke-width="1.1"/><path d="M7 4 V29" stroke="#8e8e8e"/><path d="M15 1 H21 V13 L18 16 L15 13 Z" fill="#6c9bd0" stroke="#3b5f8a" stroke-width="0.9"/></svg>
<div class="t" style="left:150px;top:440.7px;font-size:24px;line-height:24px;color:#000;font-weight:400;font-style:normal;transform:scaleX(0.9695);">Spatial Bookmarks</div>
<svg class="a" style="left:139px;top:468.5px" width="32" height="32" viewBox="0 0 32 32"><path d="M2.5 4.5 H13 L16 8 H29.5 V29.5 H2.5 Z" fill="#ececec" stroke="#8c8c8c" stroke-width="1.2"/></svg>
<div class="t" style="left:176px;top:474.7px;font-size:24px;line-height:24px;color:#000;font-weight:400;font-style:normal;transform:scaleX(0.9732);">Project Bookmarks</div>
<svg class="a" style="left:139px;top:502.5px" width="32" height="32" viewBox="0 0 32 32"><path d="M2.5 4.5 H13 L16 8 H29.5 V29.5 H2.5 Z" fill="#ececec" stroke="#8c8c8c" stroke-width="1.2"/></svg>
<div class="t" style="left:176px;top:508.7px;font-size:24px;line-height:24px;color:#000;font-weight:400;font-style:normal;transform:scaleX(0.9528);">User Bookmarks</div>
<svg class="a" style="left:90px;top:545.0px" width="10" height="16"><path d="M1 0 L9 8 L1 16 Z" fill="#555"/></svg>
<svg class="a" style="left:111px;top:536.5px" width="32" height="32" viewBox="0 0 32 32"><path d="M2.5 4.5 H13 L16 8 H29.5 V29.5 H2.5 Z" fill="#b8dc58" stroke="#808080" stroke-width="1.2"/><path d="M3 6 L29 28 M22 8 L12 29" stroke="#f4f8e0" stroke-width="1.2"/><path d="M17 12 L25 9 L28 16 L21 20 Z" fill="#0a9a0a"/></svg>
<div class="t" style="left:150px;top:542.7px;font-size:24px;line-height:24px;color:#000;font-weight:400;font-style:normal;transform:scaleX(0.9973);">Project Home</div>
<svg class="a" style="left:90px;top:579.0px" width="10" height="16"><path d="M1 0 L9 8 L1 16 Z" fill="#555"/></svg>
<svg class="a" style="left:111px;top:570.5px" width="32" height="32" viewBox="0 0 32 32"><path d="M2.5 4.5 H13 L16 8 H29.5 V29.5 H2.5 Z" fill="#ececec" stroke="#8c8c8c" stroke-width="1.2"/><path d="M9 19 L16 12 L23 19 M11 17 V25 H21 V17" fill="none" stroke="#222" stroke-width="1.8"/></svg>
<div class="t" style="left:150px;top:576.7px;font-size:24px;line-height:24px;color:#000;font-weight:400;font-style:normal;transform:scaleX(0.9995);">Home</div>
<svg class="a" style="left:90px;top:613.0px" width="10" height="16"><path d="M1 0 L9 8 L1 16 Z" fill="#555"/></svg>
<svg class="a" style="left:111px;top:604.5px" width="32" height="32" viewBox="0 0 32 32"><path d="M2.5 4.5 H13 L16 8 H29.5 V29.5 H2.5 Z" fill="#ececec" stroke="#8c8c8c" stroke-width="1.2"/></svg>
<div class="t" style="left:150px;top:610.7px;font-size:24px;line-height:24px;color:#000;font-weight:400;font-style:normal;transform:scaleX(0.9455);">C:\</div>
<svg class="a" style="left:111px;top:638.5px" width="32" height="32" viewBox="0 0 32 32"><path d="M2 13 L15 8 L28 13 V25 L15 30 L2 25 Z" fill="#dcb012" stroke="#333" stroke-width="1"/><path d="M15 18 L28 13 V25 L15 30 Z" fill="#fbf07a" stroke="#333" stroke-width="1"/><path d="M2 13 L15 18" stroke="#333"/><circle cx="15" cy="10" r="8" fill="#8fb4df" stroke="#4f7fb8"/><path d="M10 7 C13 6 14 9 12 11 C10 13 12 15 11 16 M17 5 C20 6 22 9 20 12" stroke="#2f5688" stroke-width="2.4" fill="none"/></svg>
<div class="t" style="left:150px;top:644.7px;font-size:24px;line-height:24px;color:#000;font-weight:400;font-style:normal;transform:scaleX(0.9224);">GeoPackage</div>
<svg class="a" style="left:111px;top:672.5px" width="32" height="32" viewBox="0 0 32 32"><path d="M1 31 C4 22 11 10 30 2 C26 12 20 22 6 26 Z" fill="#86aee0" stroke="#2f4f77" stroke-width="1"/><path d="M3 29 L27 5 M8 23 L14 23 M12 19 L18 18 M16 15 L22 14 M20 11 L25 10" stroke="#fff" stroke-width="0.8"/></svg>
<div class="t" style="left:150px;top:678.7px;font-size:24px;line-height:24px;color:#000;font-weight:400;font-style:normal;transform:scaleX(0.9649);">SpatiaLite</div>
<svg class="a" style="left:111px;top:706.5px" width="32" height="32" viewBox="0 0 32 32"><path d="M6 2 C2 3 1 8 2 12 C3 16 5 18 8 17 C9 21 11 25 14 30 C17 31 19 29 18 26 C17 22 17 19 18 17 C21 18 24 19 26 18 L29 19 C31 17 29 14 27 14 C28 10 29 5 25 2 C20 0 15 2 14 3 C11 1 8 1 6 2 Z" fill="#4f7fb8" stroke="#1f3f68" stroke-width="1.3"/><path d="M14 3 C12 6 12 10 14 14 M20 6 C22 8 22 12 20 14" fill="none" stroke="#1f3f68" stroke-width="1"/></svg>
<div class="t" style="left:150px;top:712.7px;font-size:24px;line-height:24px;color:#000;font-weight:400;font-style:normal;transform:scaleX(0.8615);">PostGIS</div>
<svg class="a" style="left:111px;top:740.5px" width="32" height="32" viewBox="0 0 32 32"><rect x="2.5" y="2.5" width="27" height="27" fill="none" stroke="#2f4f77" stroke-width="2" stroke-dasharray="2 2"/><rect x="6" y="6" width="20" height="20" fill="#6c9bd0" stroke="#dce8f5"/></svg>
<div class="t" style="left:150px;top:746.7px;font-size:24px;line-height:24px;color:#000;font-weight:400;font-style:normal;transform:scaleX(0.9178);">SAP HANA</div>
<svg class="a" style="left:111px;top:774.5px" width="32" height="32" viewBox="0 0 32 32"><path d="M1 30 C6 22 7 10 2 2 C12 4 24 8 31 16 C24 24 12 28 1 30 Z" fill="#6c9bd0" stroke="#2f4f77" stroke-width="1.2"/><path d="M8 5 C12 12 12 20 8 27 M15 7 C18 13 18 19 15 25 M22 10 C24 14 24 18 22 22" fill="none" stroke="#2f4f77" stroke-width="1"/></svg>
<div class="t" style="left:150px;top:780.7px;font-size:24px;line-height:24px;color:#000;font-weight:400;font-style:normal;transform:scaleX(0.9163);">MSSQL</div>
<svg class="a" style="left:111px;top:808.5px" width="32" height="32" viewBox="0 0 32 32"><rect x="1.5" y="7.5" width="29" height="19" rx="7" fill="#6c9bd0" stroke="#2a4a72" stroke-width="2"/></svg>
<div class="t" style="left:150px;top:814.7px;font-size:24px;line-height:24px;color:#000;font-weight:400;font-style:normal;transform:scaleX(0.9337);">Oracle</div>
<svg class="a" style="left:420px;top:851px" width="18" height="2"><rect x="0" y="0" width="1" height="1" fill="#b0b0b0"/><rect x="3" y="0" width="1" height="1" fill="#b0b0b0"/><rect x="6" y="0" width="1" height="1" fill="#b0b0b0"/><rect x="9" y="0" width="1" height="1" fill="#b0b0b0"/><rect x="12" y="0" width="1" height="1" fill="#b0b0b0"/><rect x="15" y="0" width="1" height="1" fill="#b0b0b0"/></svg>
<div class="t" style="left:85px;top:862.7px;font-size:24px;line-height:24px;color:#000;font-weight:400;font-style:normal;transform:scaleX(0.9022);">Layers</div>
<svg class="a" style="left:746px;top:867px" width="30" height="13"><rect x="0.5" y="0.5" width="11" height="11" rx="2" fill="none" stroke="#777"/><rect x="3" y="5" width="4" height="4" fill="none" stroke="#777"/><path d="M5 3 H9 V7" fill="none" stroke="#777"/><rect x="16.5" y="0.5" width="11" height="11" rx="2" fill="none" stroke="#777"/><path d="M19 3 L25 9 M25 3 L19 9" stroke="#666" stroke-width="1.8"/></svg>
<svg class="a" style="left:93px;top:899px" width="22" height="22" viewBox="0 0 32 32"><path d="M2 18 L14 10 L20 22 L6 30 Z" fill="#e82020"/><path d="M4 14 L16 8 L22 16 L9 24 Z" fill="#f7e040"/><path d="M7 11 L18 6 L22 12 L11 19 Z" fill="#4f7fc8"/><path d="M10 20 L19 10 L25 17 L16 26 Z" fill="#d8a040" stroke="#8a5a10"/><path d="M20 12 L30 2" stroke="#c8902a" stroke-width="3"/></svg>
<svg class="a" style="left:127px;top:899px" width="22" height="22" viewBox="0 0 32 32"><rect x="3" y="8" width="17" height="20" fill="none" stroke="#999" stroke-width="1.3"/><rect x="7" y="5" width="17" height="20" fill="#f4f4f4" stroke="#777" stroke-width="1.3"/><path d="M13 2 V14 M17 2 V14 M13 2 H17" stroke="#555" stroke-width="1.3"/><rect x="17" y="17" width="14" height="14" rx="2.5" fill="#5a9b5e"/><path d="M24.0 19 V29 M19 24.0 H29" stroke="#fff" stroke-width="2.4"/></svg>
<svg class="a" style="left:161px;top:899px" width="22" height="22" viewBox="0 0 32 32"><path d="M1 15 C7 6 21 5 29 13 C21 22 8 23 1 15 Z" fill="#fff" stroke="#555" stroke-width="1.1"/><circle cx="15" cy="14" r="6.5" fill="#5f8fc6"/><circle cx="14" cy="13" r="2.8" fill="#111"/><path d="M18 17 H31 L24.5 24 Z" fill="#333"/></svg>
<svg class="a" style="left:196px;top:899px" width="22" height="22" viewBox="0 0 32 32"><rect x="3" y="2" width="25" height="5" fill="#f5e35a" stroke="#777" stroke-width="0.8"/><path d="M3 8 H28 L18 18 V30 L12 27 V18 Z" fill="#6c9bd0" stroke="#3f6ca0" stroke-width="1"/><path d="M16 19 H31 L23.5 27 Z" fill="#333"/></svg>
<svg class="a" style="left:231px;top:899px" width="22" height="22" viewBox="0 0 32 32"><text x="1" y="20" font-family="Liberation Serif" font-size="24" fill="#cfcfcf">ε</text><rect x="16" y="19" width="12" height="11" rx="2" fill="none" stroke="#dadada" stroke-width="2.5"/></svg>
<svg class="a" style="left:287px;top:899px" width="22" height="22" viewBox="0 0 32 32"><path d="M3 5 H26 M5 5 V30" stroke="#bdbdbd" stroke-width="1.5"/><rect x="6" y="11" width="6" height="6" fill="#f7a020"/><rect x="6" y="22" width="6" height="6" fill="#f7a020"/><path d="M18 30 L28 20 H22 V4 H15 V20 H9 Z" fill="#5f8fc6" stroke="#2f4f77" stroke-width="1"/></svg>
<svg class="a" style="left:321px;top:899px" width="22" height="22" viewBox="0 0 32 32"><path d="M3 5 H26 M5 5 V30" stroke="#bdbdbd" stroke-width="1.5"/><rect x="6" y="11" width="6" height="6" fill="#f7a020"/><rect x="6" y="22" width="6" height="6" fill="#f7a020"/><path d="M18 2 L28 12 H22 V28 H15 V12 H9 Z" fill="#5f8fc6" stroke="#2f4f77" stroke-width="1"/></svg>
<svg class="a" style="left:355px;top:899px" width="22" height="22" viewBox="0 0 32 32"><rect x="3" y="3" width="21" height="21" fill="#eeeeee" stroke="#8c8c8c" stroke-width="1.8"/><rect x="17" y="19" width="14" height="11" rx="3" fill="#e23a3a"/><path d="M20 24.5 H28" stroke="#fff" stroke-width="2.5"/></svg>
<svg class="a" style="left:261.0px;top:906px" width="14" height="8"><path d="M0 0 H14 L7.0 8 Z" fill="#999"/></svg>
<div class="a" style="left:80px;top:934px;width:694px;height:448px;background:#fff;border:1px solid #a0a0a0;"></div>
<div class="a" style="left:81px;top:935px;width:667px;height:448px;overflow:hidden">
<div class="a" style="left:0;top:131.5px;width:667px;height:34px;background:#ececec"></div>
<svg class="a" style="left:55px;top:4.5px" width="10" height="16"><path d="M1 0 L9 8 L1 16 Z" fill="#555"/></svg>
<div class="a" style="left:83px;top:-1.0px;width:26px;height:26px;border:1px solid #a8a8a8;background:#fff"></div>
<svg class="a" style="left:121px;top:-0.5px" width="26" height="26" viewBox="0 0 32 32"><rect x="1" y="1" width="10.2" height="10.2" fill="#25395a"/><rect x="11" y="1" width="10.2" height="10.2" fill="#aac4e4"/><rect x="21" y="1" width="10.2" height="10.2" fill="#25395a"/><rect x="1" y="11" width="10.2" height="10.2" fill="#aac4e4"/><rect x="11" y="11" width="10.2" height="10.2" fill="#25395a"/><rect x="21" y="11" width="10.2" height="10.2" fill="#aac4e4"/><rect x="1" y="21" width="10.2" height="10.2" fill="#25395a"/><rect x="11" y="21" width="10.2" height="10.2" fill="#aac4e4"/></svg>
<div class="t" style="left:155px;top:1.7px;font-size:24px;line-height:24px;color:#7b7b7b;font-weight:700;font-style:italic;transform:scaleX(0.9840);">Slope Normalised</div>
<svg class="a" style="left:55px;top:38.5px" width="10" height="16"><path d="M1 0 L9 8 L1 16 Z" fill="#555"/></svg>
<div class="a" style="left:83px;top:33.0px;width:26px;height:26px;border:1px solid #a8a8a8;background:#fff"></div>
<svg class="a" style="left:121px;top:33.5px" width="26" height="26" viewBox="0 0 32 32"><rect x="1" y="1" width="10.2" height="10.2" fill="#25395a"/><rect x="11" y="1" width="10.2" height="10.2" fill="#aac4e4"/><rect x="21" y="1" width="10.2" height="10.2" fill="#25395a"/><rect x="1" y="11" width="10.2" height="10.2" fill="#aac4e4"/><rect x="11" y="11" width="10.2" height="10.2" fill="#25395a"/><rect x="21" y="11" width="10.2" height="10.2" fill="#aac4e4"/><rect x="1" y="21" width="10.2" height="10.2" fill="#25395a"/><rect x="11" y="21" width="10.2" height="10.2" fill="#aac4e4"/></svg>
<div class="t" style="left:155px;top:35.7px;font-size:24px;line-height:24px;color:#7b7b7b;font-weight:700;font-style:italic;transform:scaleX(0.9474);">Slope Raster</div>
<svg class="a" style="left:55px;top:72.5px" width="10" height="16"><path d="M1 0 L9 8 L1 16 Z" fill="#555"/></svg>
<div class="a" style="left:83px;top:67.0px;width:26px;height:26px;border:1px solid #a8a8a8;background:#fff"></div>
<svg class="a" style="left:121px;top:67.5px" width="26" height="26" viewBox="0 0 32 32"><rect x="1" y="1" width="10.2" height="10.2" fill="#25395a"/><rect x="11" y="1" width="10.2" height="10.2" fill="#aac4e4"/><rect x="21" y="1" width="10.2" height="10.2" fill="#25395a"/><rect x="1" y="11" width="10.2" height="10.2" fill="#aac4e4"/><rect x="11" y="11" width="10.2" height="10.2" fill="#25395a"/><rect x="21" y="11" width="10.2" height="10.2" fill="#aac4e4"/><rect x="1" y="21" width="10.2" height="10.2" fill="#25395a"/><rect x="11" y="21" width="10.2" height="10.2" fill="#aac4e4"/></svg>
<div class="t" style="left:155px;top:69.7px;font-size:24px;line-height:24px;color:#7b7b7b;font-weight:700;font-style:italic;transform:scaleX(0.9973);">Elevation 100</div>
<svg class="a" style="left:55px;top:106.5px" width="10" height="16"><path d="M1 0 L9 8 L1 16 Z" fill="#555"/></svg>
<div class="a" style="left:83px;top:101.0px;width:26px;height:26px;border:1px solid #a8a8a8;background:#fff"></div>
<svg class="a" style="left:121px;top:101.5px" width="26" height="26" viewBox="0 0 32 32"><rect x="1" y="1" width="10.2" height="10.2" fill="#25395a"/><rect x="11" y="1" width="10.2" height="10.2" fill="#aac4e4"/><rect x="21" y="1" width="10.2" height="10.2" fill="#25395a"/><rect x="1" y="11" width="10.2" height="10.2" fill="#aac4e4"/><rect x="11" y="11" width="10.2" height="10.2" fill="#25395a"/><rect x="21" y="11" width="10.2" height="10.2" fill="#aac4e4"/><rect x="1" y="21" width="10.2" height="10.2" fill="#25395a"/><rect x="11" y="21" width="10.2" height="10.2" fill="#aac4e4"/></svg>
<div class="t" style="left:155px;top:103.7px;font-size:24px;line-height:24px;color:#7b7b7b;font-weight:700;font-style:italic;transform:scaleX(0.9929);">base raw</div>
<svg class="a" style="left:51px;top:143.5px" width="16" height="10"><path d="M0 1 L16 1 L8 9 Z" fill="#555"/></svg>
<div class="a" style="left:83px;top:135.0px;width:26px;height:26px;border:1px solid #a8a8a8;background:#fff"></div>
<svg class="a" style="left:86px;top:137.5px" width="22" height="22"><path d="M3 11 L8.5 18 L18 3" fill="none" stroke="#000" stroke-width="3"/></svg>
<svg class="a" style="left:121px;top:135.5px" width="26" height="26" viewBox="0 0 32 32"><rect x="1" y="1" width="10.2" height="10.2" fill="#1d4c80"/><rect x="11" y="1" width="10.2" height="10.2" fill="#6fa8dc"/><rect x="21" y="1" width="10.2" height="10.2" fill="#1d4c80"/><rect x="1" y="11" width="10.2" height="10.2" fill="#6fa8dc"/><rect x="11" y="11" width="10.2" height="10.2" fill="#1d4c80"/><rect x="21" y="11" width="10.2" height="10.2" fill="#6fa8dc"/><rect x="1" y="21" width="10.2" height="10.2" fill="#1d4c80"/><rect x="11" y="21" width="10.2" height="10.2" fill="#6fa8dc"/></svg>
<div class="t" style="left:155px;top:137.7px;font-size:24px;line-height:24px;color:#000;font-weight:700;font-style:normal;text-decoration:underline;transform:scaleX(1.0167);">DEM SRTM 30M KALIMANTAN TIMUR</div>
<div class="t" style="left:0;top:0"></div>
</div>
<div class="t" style="left:204px;top:1106.2px;font-size:24px;line-height:24px;color:#000;font-weight:400;font-style:normal;transform:scaleX(0.9487);">Band 1 (Gray)</div>
<div class="a" style="left:204px;top:1136px;width:27px;height:159px;background:linear-gradient(#ffffff,#000000)"></div>
<div class="t" style="left:240px;top:1134.7px;font-size:24px;line-height:24px;color:#000;font-weight:400;font-style:normal;transform:scaleX(0.8158);">1,971</div>
<div class="t" style="left:240px;top:1271.2px;font-size:24px;line-height:24px;color:#000;font-weight:400;font-style:normal;transform:scaleX(0.8649);">-29</div>
<svg class="a" style="left:131px;top:1309px" width="16" height="10"><path d="M0 1 L16 1 L8 9 Z" fill="#555"/></svg>
<div class="a" style="left:164px;top:1300px;width:26px;height:26px;border:1px solid #a8a8a8;background:#fff"></div>
<svg class="a" style="left:202px;top:1301px" width="26" height="26" viewBox="0 0 32 32"><rect x="1" y="1" width="10.2" height="10.2" fill="#25395a"/><rect x="11" y="1" width="10.2" height="10.2" fill="#aac4e4"/><rect x="21" y="1" width="10.2" height="10.2" fill="#25395a"/><rect x="1" y="11" width="10.2" height="10.2" fill="#aac4e4"/><rect x="11" y="11" width="10.2" height="10.2" fill="#25395a"/><rect x="21" y="11" width="10.2" height="10.2" fill="#aac4e4"/><rect x="1" y="21" width="10.2" height="10.2" fill="#25395a"/><rect x="11" y="21" width="10.2" height="10.2" fill="#aac4e4"/></svg>
<div class="t" style="left:236px;top:1302.7px;font-size:24px;line-height:24px;color:#7b7b7b;font-weight:700;font-style:italic;transform:scaleX(0.9781);">rsfsdfwww</div>
<div class="t" style="left:204px;top:1336.7px;font-size:24px;line-height:24px;color:#000;font-weight:400;font-style:normal;transform:scaleX(0.9888);">Band 1: Height</div>
<div class="a" style="left:204px;top:1369px;width:27px;height:14px;background:linear-gradient(#ffffff,#e6e6e6)"></div>
<div class="a" style="left:236px;top:1366px;width:110px;height:17px;overflow:hidden"><div class="t" style="left:4px;top:0px;font-size:24px;line-height:24px;color:#000;transform:scaleX(0.828)">1.283704</div></div>
<div class="a" style="left:747px;top:934px;width:29px;height:450px;background:#b4b4b4;"></div>
<div class="a" style="left:748px;top:935px;width:27px;height:448px;background:linear-gradient(90deg,#fdfdfd,#f1f1f1);"></div>
<div class="a" style="left:748px;top:962px;width:27px;height:24px;background:#e3e3e3;"></div>
<div class="a" style="left:748px;top:962px;width:27px;height:1px;background:#b8b8b8;"></div>
<div class="a" style="left:748px;top:986px;width:27px;height:1px;background:#b8b8b8;"></div>
<div class="a" style="left:748px;top:1089px;width:27px;height:266px;background:#e3e3e3;"></div>
<div class="a" style="left:748px;top:1089px;width:27px;height:1px;background:#b8b8b8;"></div>
<div class="a" style="left:748px;top:1355px;width:27px;height:1px;background:#b8b8b8;"></div>
<div class="a" style="left:748px;top:962px;width:27px;height:1px;background:#c0c0c0;"></div>
<div class="a" style="left:748px;top:1355px;width:27px;height:1px;background:#c0c0c0;"></div>
<svg class="a" style="left:753px;top:944px" width="16" height="10"><path d="M0 9 L8 1 L16 9 Z" fill="#606060"/></svg>
<svg class="a" style="left:753px;top:1365px" width="16" height="10"><path d="M0 1 L16 1 L8 9 Z" fill="#606060"/></svg>
<svg class="a" style="left:420px;top:1388px" width="18" height="2"><rect x="0" y="0" width="1" height="1" fill="#b0b0b0"/><rect x="3" y="0" width="1" height="1" fill="#b0b0b0"/><rect x="6" y="0" width="1" height="1" fill="#b0b0b0"/><rect x="9" y="0" width="1" height="1" fill="#b0b0b0"/><rect x="12" y="0" width="1" height="1" fill="#b0b0b0"/><rect x="15" y="0" width="1" height="1" fill="#b0b0b0"/></svg>
<svg class="a" style="left:781px;top:1210px" width="3" height="18"><rect x="1" y="0" width="1" height="1" fill="#b0b0b0"/><rect x="1" y="3" width="1" height="1" fill="#b0b0b0"/><rect x="1" y="6" width="1" height="1" fill="#b0b0b0"/><rect x="1" y="9" width="1" height="1" fill="#b0b0b0"/><rect x="1" y="12" width="1" height="1" fill="#b0b0b0"/><rect x="1" y="15" width="1" height="1" fill="#b0b0b0"/></svg>
<div class="t" style="left:84px;top:1400.2px;font-size:24px;line-height:24px;color:#000;font-weight:400;font-style:normal;transform:scaleX(0.9580);">Statistics</div>
<svg class="a" style="left:746px;top:1405px" width="30" height="13"><rect x="0.5" y="0.5" width="11" height="11" rx="2" fill="none" stroke="#777"/><rect x="3" y="5" width="4" height="4" fill="none" stroke="#777"/><path d="M5 3 H9 V7" fill="none" stroke="#777"/><rect x="16.5" y="0.5" width="11" height="11" rx="2" fill="none" stroke="#777"/><path d="M19 3 L25 9 M25 3 L19 9" stroke="#666" stroke-width="1.8"/></svg>
<div class="a" style="left:80px;top:1425px;width:694px;height:38px;background:linear-gradient(#fbfbfb,#ececec);border:1px solid #b0b0b0;border-radius:3px"></div>
<svg class="a" style="left:86px;top:1429px" width="32" height="32" viewBox="0 0 32 32"><defs><linearGradient id="pgr" x1="0" y1="0" x2="1" y2="1"><stop offset="0" stop-color="#f4f4f4"/><stop offset="1" stop-color="#cdcdcd"/></linearGradient></defs><path d="M5 3.5 C9 2.5 15 5 19 6.5 C23 5.5 28 3.5 30.5 6 C32 9 32 18 30 21.5 C28 23 24 21 21 20.5 C17 21 10 26 6 26.5 C2 27 1.5 22 1.5 16 C1.5 10 2 5 5 3.5 Z" fill="url(#pgr)" stroke="#858780" stroke-width="1.8"/></svg>
<div class="t" style="left:121px;top:1434.2px;font-size:24px;line-height:24px;color:#000;font-weight:400;font-style:normal;transform:scaleX(0.9007);">Airport Buffered</div>
<svg class="a" style="left:747.0px;top:1440px" width="14" height="8"><path d="M0 0 H14 L7.0 8 Z" fill="#555"/></svg>
<div class="a" style="left:80px;top:1468px;width:642px;height:37px;background:#fff;border:1px solid #b0b0b0;border-radius:2px"></div>
<div class="a" style="left:684px;top:1469px;width:39px;height:37px;background:#f0f0f0;"></div>
<div class="t" style="left:84px;top:1476.1px;font-size:20px;line-height:20px;color:#555;font-weight:700;font-style:normal;transform:scaleX(0.9888);">123</div>
<svg class="a" style="left:695.0px;top:1483px" width="14" height="8"><path d="M0 0 H14 L7.0 8 Z" fill="#555"/></svg>
<div class="a" style="left:736px;top:1468px;width:38px;height:37px;background:linear-gradient(#fbfbfb,#ececec);border:1px solid #b0b0b0;border-radius:2px"></div>
<svg class="a" style="left:740px;top:1471px" width="32" height="32" viewBox="0 0 32 32"><text x="5" y="27" font-family="Liberation Serif" font-size="34" fill="#5a2a7a">ε</text></svg>
<div class="a" style="left:80px;top:1510px;width:694px;height:560px;background:#fff;border:1px solid #a0a0a0;"></div>
<div class="a" style="left:81px;top:1511px;width:694px;height:39px;background:#f0f0f0;"></div>
<div class="a" style="left:81px;top:1511px;width:400px;height:39px;background:linear-gradient(#fdfdfd,#ececec);"></div>
<div class="a" style="left:81px;top:1549px;width:400px;height:1px;background:#b8b8b8;"></div>
<div class="a" style="left:280px;top:1511px;width:1px;height:38px;background:#d0d0d0;"></div>
<div class="a" style="left:481px;top:1511px;width:1px;height:38px;background:#e8e8e8;"></div>
<div class="t" style="left:140.5px;top:1519.7px;font-size:24px;line-height:24px;color:#000;font-weight:400;font-style:normal;transform:scaleX(0.9520);">Statistic</div>
<div class="t" style="left:352.5px;top:1519.7px;font-size:24px;line-height:24px;color:#000;font-weight:400;font-style:normal;transform:scaleX(0.9562);">Value</div>
<div class="a" style="left:80px;top:2081px;width:25px;height:25px;border:1px solid #a8a8a8;background:#fff"></div>
<div class="t" style="left:119px;top:2083.7px;font-size:24px;line-height:24px;color:#000;font-weight:400;font-style:normal;transform:scaleX(0.8716);">Selected features only</div>
<svg class="a" style="left:654px;top:2079px" width="32" height="32" viewBox="0 0 32 32"><path d="M11 3.5 H21 L26 8.5 V25.5 H11 Z" fill="#fff" stroke="#777"/><path d="M5 8.5 H15 L20 13.5 V30.5 H5 Z" fill="#fff" stroke="#777"/><path d="M8 17 H17 M8 20 H17 M8 23 H17 M8 26 H17" stroke="#777"/></svg>
<svg class="a" style="left:698px;top:2079px" width="32" height="32" viewBox="0 0 32 32"><path d="M3 17 C3 9 9 4 16 4 C20 4 23 5.5 25.5 8 L29.5 4 V15.5 H18 L22 11.5 C20.5 10 18.5 9 16 9 C11.5 9 8.5 12.5 8.5 17 Z" fill="#4a86cc" stroke="#3a6eb0" stroke-width="0.6"/><path d="M29 15 C29 23 23 28 16 28 C12 28 9 26.5 6.5 24 L2.5 28 V16.5 H14 L10 20.5 C11.5 22 13.5 23 16 23 C20.5 23 23.5 19.5 23.5 15 Z" fill="#5b94d6" stroke="#3a6eb0" stroke-width="0.6"/></svg>
<div class="a" style="left:737px;top:2080px;width:37px;height:29px;background:linear-gradient(#fbfbfb,#ececec);border:1px solid #b0b0b0;border-radius:2px"></div>
<div class="t" style="left:752px;top:2086.1px;font-size:20px;line-height:20px;color:#000;font-weight:400;font-style:normal;transform:scaleX(0.7198);">...</div>
<svg class="a" style="left:758px;top:2093px" width="14" height="10"><path d="M0 1 L14 1 L7 9 Z" fill="#444"/></svg>
<div class="a" style="left:788px;top:323px;width:2300px;height:1791px;background:#f6f6f6;"></div>
<svg class="a" style="left:789px;top:324px" width="2298" height="1790" viewBox="789 324 2298 1790">
<defs><filter id="bl" x="-20%" y="-20%" width="140%" height="140%" color-interpolation-filters="sRGB"><feGaussianBlur stdDeviation="35"/></filter></defs>
<rect x="789" y="324" width="2298" height="1790" fill="#040404"/>
<ellipse cx="2750" cy="550" rx="350" ry="260" fill="#070707" filter="url(#bl)"/>
<rect x="789" y="324" width="120" height="1790" fill="#060606" filter="url(#bl)"/>
<polygon points="842,300 1190,300 1681,529 1949,690 1217,560 1083,975 760,823 760,300" fill="#000" filter="url(#bl)"/>
<rect x="1100" y="1550" width="1000" height="600" fill="#030303" filter="url(#bl)"/>
</svg>
<svg class="a" style="left:0;top:0" width="3840" height="2160">
<polygon points="1217,561 1901,692 2390,692 2540,1019 2449,1326 1735,1477 1205,1350 1079,976" fill="#1a1806" stroke="#e0d800" stroke-width="1.4" stroke-linejoin="miter"/>
<path d="M1997.5 1057.5 L2010 1064.5 L2005.8 1066.5 L2011.5 1071.5 L2009.5 1073.5 L2004 1068.3 L2002.8 1071.5 Z" fill="#fff" stroke="#000" stroke-width="0.9" stroke-linejoin="round"/>
</svg>
<div class="a" style="left:3088px;top:323px;width:752px;height:1791px;background:#f0f0f0;"></div>
<div class="t" style="left:3104px;top:327.7px;font-size:24px;line-height:24px;color:#000;font-weight:400;font-style:normal;transform:scaleX(0.9774);">Processing Toolbox</div>
<svg class="a" style="left:3810px;top:332px" width="30" height="13"><rect x="0.5" y="0.5" width="11" height="11" rx="2" fill="none" stroke="#777"/><rect x="3" y="5" width="4" height="4" fill="none" stroke="#777"/><path d="M5 3 H9 V7" fill="none" stroke="#777"/><rect x="16.5" y="0.5" width="11" height="11" rx="2" fill="none" stroke="#777"/><path d="M19 3 L25 9 M25 3 L19 9" stroke="#666" stroke-width="1.8"/></svg>
<svg class="a" style="left:3112px;top:363px" width="24" height="24" viewBox="0 0 32 32"><rect x="7" y="0" width="4" height="5" fill="#d01818" transform="rotate(0 9 9)"/><rect x="7" y="0" width="4" height="5" fill="#d01818" transform="rotate(45 9 9)"/><rect x="7" y="0" width="4" height="5" fill="#d01818" transform="rotate(90 9 9)"/><rect x="7" y="0" width="4" height="5" fill="#d01818" transform="rotate(135 9 9)"/><rect x="7" y="0" width="4" height="5" fill="#d01818" transform="rotate(180 9 9)"/><rect x="7" y="0" width="4" height="5" fill="#d01818" transform="rotate(225 9 9)"/><rect x="7" y="0" width="4" height="5" fill="#d01818" transform="rotate(270 9 9)"/><rect x="7" y="0" width="4" height="5" fill="#d01818" transform="rotate(315 9 9)"/><circle cx="9" cy="9" r="5.5" fill="#d01818"/><circle cx="9" cy="9" r="1.5" fill="#fff"/><rect x="19" y="9" width="3" height="5" fill="#555" transform="rotate(0 20.5 17)"/><rect x="19" y="9" width="3" height="5" fill="#555" transform="rotate(45 20.5 17)"/><rect x="19" y="9" width="3" height="5" fill="#555" transform="rotate(90 20.5 17)"/><rect x="19" y="9" width="3" height="5" fill="#555" transform="rotate(135 20.5 17)"/><rect x="19" y="9" width="3" height="5" fill="#555" transform="rotate(180 20.5 17)"/><rect x="19" y="9" width="3" height="5" fill="#555" transform="rotate(225 20.5 17)"/><rect x="19" y="9" width="3" height="5" fill="#555" transform="rotate(270 20.5 17)"/><rect x="19" y="9" width="3" height="5" fill="#555" transform="rotate(315 20.5 17)"/><circle cx="20.5" cy="17" r="5" fill="#555"/><path d="M11 18 H30 L21 28 Z" fill="#222"/><rect x="12" y="19.5" width="2" height="4" fill="#8ab0e8" transform="rotate(0 13 25)"/><rect x="12" y="19.5" width="2" height="4" fill="#8ab0e8" transform="rotate(45 13 25)"/><rect x="12" y="19.5" width="2" height="4" fill="#8ab0e8" transform="rotate(90 13 25)"/><rect x="12" y="19.5" width="2" height="4" fill="#8ab0e8" transform="rotate(135 13 25)"/><rect x="12" y="19.5" width="2" height="4" fill="#8ab0e8" transform="rotate(180 13 25)"/><rect x="12" y="19.5" width="2" height="4" fill="#8ab0e8" transform="rotate(225 13 25)"/><rect x="12" y="19.5" width="2" height="4" fill="#8ab0e8" transform="rotate(270 13 25)"/><rect x="12" y="19.5" width="2" height="4" fill="#8ab0e8" transform="rotate(315 13 25)"/><circle cx="13" cy="25" r="3.5" fill="#8ab0e8"/></svg>
<svg class="a" style="left:3147px;top:363px" width="24" height="24" viewBox="0 0 32 32"><path d="M15 2 C9 2 9 4 9 6 V9 H16 V10 H6 C3 10 2 13 2 16 C2 20 4 22 6 22 H9 V18 C9 15 11 14 14 14 H20 C22 14 23 12 23 10 V6 C23 3 20 2 15 2 Z" fill="#3b77b0"/><path d="M16 30 C22 30 22 28 22 26 V23 H15 V22 H25 C28 22 29 19 29 16 C29 12 27 10 25 10 H23 V14 C23 17 21 18 18 18 H12 C10 18 9 20 9 22 V26 C9 29 12 30 16 30 Z" fill="#f7cf3a"/><path d="M12 17 H32 L22 29 Z" fill="#3a3a2a"/></svg>
<svg class="a" style="left:3180px;top:363px" width="24" height="24" viewBox="0 0 32 32"><circle cx="16" cy="16" r="13.5" fill="#f0f0f0" stroke="#666" stroke-width="1.6"/><path d="M16 5 V17 L22.5 22" fill="none" stroke="#777" stroke-width="1.6"/></svg>
<svg class="a" style="left:3214px;top:363px" width="24" height="24" viewBox="0 0 32 32"><path d="M7.5 2.5 H20 L25.5 8 V29.5 H7.5 Z" fill="#fff" stroke="#777" stroke-width="1.2"/><path d="M11 11 H17 M11 16 H23 M11 21 H23 M11 26 H23" stroke="#222" stroke-width="1.4"/></svg>
<svg class="a" style="left:3262px;top:363px" width="24" height="24" viewBox="0 0 32 32"><rect x="3" y="3" width="18" height="18" fill="#e4e3dd" stroke="#d4d3cc"/><path d="M27 8 L31 11 L19 29 L16 30 L17 27 Z" fill="#efefef" stroke="#dadada"/></svg>
<svg class="a" style="left:3310px;top:363px" width="24" height="24" viewBox="0 0 32 32"><path d="M11 12 L28 29" stroke="#333" stroke-width="6.5" stroke-linecap="round"/><path d="M11.5 12.5 L27.5 28.5" stroke="#e6cf7a" stroke-width="4" stroke-linecap="round"/><path d="M5 4 C2 6 2 11 5 13 C8 15 12 14 14 12 L11 9 L12 6 L9 3 C8 3 6 3 5 4 Z" fill="#e8e8e8" stroke="#333" stroke-width="1.3"/></svg>
<div class="a" style="left:3250px;top:365.0px;width:1px;height:20px;background:#c8c8c8;"></div>
<div class="a" style="left:3298px;top:365.0px;width:1px;height:20px;background:#c8c8c8;"></div>
<div class="a" style="left:3100px;top:399px;width:738px;height:35px;background:#fff;border:1px solid #a8a8a8;border-radius:2px"></div>
<svg class="a" style="left:3113px;top:405px" width="28" height="28"><circle cx="11" cy="11" r="8" fill="none" stroke="#777" stroke-width="2.2"/><path d="M17 17 L24 24" stroke="#777" stroke-width="2.8"/></svg>
<div class="t" style="left:3149px;top:405.7px;font-size:24px;line-height:24px;color:#000;font-weight:400;font-style:normal;transform:scaleX(0.8433);">serval</div>
<svg class="a" style="left:3798px;top:407px" width="30" height="22"><path d="M8 1 H28 V21 H8 L1 11 Z" fill="#8a8a8a"/><path d="M13 5 L22 17 M22 5 L13 17" stroke="#fff" stroke-width="2.2"/></svg>
<div class="a" style="left:3100px;top:437px;width:739px;height:1628px;background:#fff;border:1px solid #a0a0a0;"></div>
<div class="a" style="left:3100px;top:2067px;width:192px;height:43px;background:linear-gradient(#dedede,#d6d6d6);border:1px solid #c6c6c6;border-bottom-left-radius:3px;"></div>
<div class="t" style="left:3124px;top:2077.7px;font-size:24px;line-height:24px;color:#000;font-weight:400;font-style:normal;transform:scaleX(0.8837);">Identify Results</div>
<div class="a" style="left:3293px;top:2066px;width:224px;height:46px;background:linear-gradient(#f3f3f3,#f7f7f7);border:1px solid #c6c6c6;border-top:none;border-bottom-left-radius:3px;border-bottom-right-radius:3px;"></div>
<div class="t" style="left:3317px;top:2077.7px;font-size:24px;line-height:24px;color:#000;font-weight:400;font-style:normal;transform:scaleX(0.8571);">Processing Toolbox</div>
<div class="a" style="left:0px;top:2114px;width:788px;height:43px;background:#f0f0f0;"></div>
<div class="a" style="left:788px;top:2114px;width:3052px;height:43px;background:#f0f0f0;"></div>
<div class="a" style="left:4px;top:2118px;width:383px;height:37px;background:#fff;border:1px solid #b0b0b0;border-radius:2px"></div>
<svg class="a" style="left:16px;top:2123px" width="30" height="30"><circle cx="12" cy="12" r="8.5" fill="none" stroke="#888" stroke-width="2.4"/><path d="M18 18 L26 26" stroke="#888" stroke-width="3"/></svg>
<div class="t" style="left:53px;top:2126.2px;font-size:24px;line-height:24px;color:#6d6d6d;font-weight:400;font-style:normal;transform:scaleX(0.8938);">Type to locate (Ctrl+K)</div>
<div class="t" style="left:2488px;top:2125.2px;font-size:24px;line-height:24px;color:#000;font-weight:400;font-style:normal;transform:scaleX(0.8516);">Coordinate</div>
<div class="a" style="left:2592px;top:2119px;width:182px;height:35px;background:#fff;border:1px solid #b0b0b0;border-radius:2px"></div>
<div class="t" style="left:2599px;top:2125.2px;font-size:24px;line-height:24px;color:#000;font-weight:400;font-style:normal;transform:scaleX(0.8336);">-2324068,1407615</div>
<svg class="a" style="left:2779px;top:2120px" width="32" height="32" viewBox="0 0 32 32"><ellipse cx="13" cy="14" rx="9" ry="12" transform="rotate(-25 13 14)" fill="#fff" stroke="#111" stroke-width="2.5"/><path d="M10 6 L13 13" stroke="#111" stroke-width="2"/><circle cx="20" cy="25" r="4" fill="#fff" stroke="#111" stroke-width="2"/><path d="M24 5 L26 3 M27 9 L30 8 M2 20 L4 22" stroke="#111" stroke-width="1.2" stroke-dasharray="1.5 1.5"/></svg>
<div class="t" style="left:2825px;top:2125.2px;font-size:24px;line-height:24px;color:#000;font-weight:400;font-style:normal;transform:scaleX(0.7994);">Scale</div>
<div class="a" style="left:2877px;top:2121px;width:136px;height:31px;background:#fff;border:1px solid #b0b0b0;border-radius:2px"></div>
<div class="a" style="left:2974px;top:2122px;width:40px;height:31px;background:#f0f0f0;"></div>
<div class="t" style="left:2882px;top:2125.2px;font-size:24px;line-height:24px;color:#000;font-weight:400;font-style:normal;transform:scaleX(0.8413);">1:46087</div>
<svg class="a" style="left:2987.0px;top:2133px" width="14" height="8"><path d="M0 0 H14 L7.0 8 Z" fill="#555"/></svg>
<svg class="a" style="left:3027px;top:2120px" width="28" height="34"><path d="M7 15 V10 a7 7 0 0 1 14 0 V15" fill="none" stroke="#6a6a6a" stroke-width="3.2"/><rect x="3" y="14" width="22" height="18" rx="3" fill="#6a6a6a"/></svg>
<div class="t" style="left:3064px;top:2125.7px;font-size:24px;line-height:24px;color:#000;font-weight:400;font-style:normal;transform:scaleX(0.8712);">Magnifier</div>
<div class="a" style="left:3154px;top:2119px;width:129px;height:36px;background:#fff;border:1px solid #b0b0b0;border-radius:2px"></div>
<div class="a" style="left:3257px;top:2120px;width:1px;height:36px;background:#d8d8d8;"></div>
<div class="t" style="left:3160px;top:2126.2px;font-size:24px;line-height:24px;color:#000;font-weight:400;font-style:normal;transform:scaleX(0.8470);">100%</div>
<svg class="a" style="left:3263px;top:2124px" width="18" height="28"><path d="M1 10 L9 2 L17 10 Z M1 18 L9 26 L17 18 Z" fill="#555"/></svg>
<div class="t" style="left:3295px;top:2126.2px;font-size:24px;line-height:24px;color:#000;font-weight:400;font-style:normal;transform:scaleX(0.8502);">Rotation</div>
<div class="a" style="left:3381px;top:2119px;width:114px;height:36px;background:#fff;border:1px solid #b0b0b0;border-radius:2px"></div>
<div class="a" style="left:3469px;top:2120px;width:1px;height:36px;background:#d8d8d8;"></div>
<div class="t" style="left:3387px;top:2126.2px;font-size:24px;line-height:24px;color:#000;font-weight:400;font-style:normal;transform:scaleX(0.9065);">0.0 °</div>
<svg class="a" style="left:3474px;top:2124px" width="18" height="28"><path d="M1 10 L9 2 L17 10 Z M1 18 L9 26 L17 18 Z" fill="#555"/></svg>
<div class="a" style="left:3503px;top:2123px;width:26px;height:26px;border:1px solid #a8a8a8;background:#fff"></div>
<svg class="a" style="left:3506px;top:2126px" width="22" height="22"><path d="M3 11 L8.5 18 L18 3" fill="none" stroke="#000" stroke-width="3"/></svg>
<div class="t" style="left:3543px;top:2126.2px;font-size:24px;line-height:24px;color:#000;font-weight:400;font-style:normal;transform:scaleX(0.8257);">Render</div>
<svg class="a" style="left:3622px;top:2123px" width="30" height="30" viewBox="0 0 32 32"><ellipse cx="15" cy="15" rx="13" ry="12" fill="none" stroke="#777" stroke-width="1.6"/><path d="M2 15 H28 M4 9 H26 M4 21 H26 M15 3 C9 8 9 22 15 27 M15 3 C21 8 21 22 15 27 M15 3 V27" fill="none" stroke="#777" stroke-width="1.3"/></svg>
<div class="t" style="left:3654px;top:2126.2px;font-size:24px;line-height:24px;color:#000;font-weight:400;font-style:normal;transform:scaleX(0.7922);">EPSG:23845</div>
<svg class="a" style="left:3801px;top:2122px" width="32" height="32" viewBox="0 0 32 32"><path d="M16 3 C24 3 30 8 30 14 C30 20 24 24 16 24 L13 24 L22 30 L8 23 C4 21 2 18 2 14 C2 8 8 3 16 3 Z" fill="#6d6d6d"/><circle cx="10" cy="14" r="2" fill="#fff"/><circle cx="16" cy="14" r="2" fill="#fff"/><circle cx="22" cy="14" r="2" fill="#fff"/></svg>
<div class="a" style="left:0px;top:2157px;width:3840px;height:3px;background:#1c1c1c;"></div>
</body></html>
